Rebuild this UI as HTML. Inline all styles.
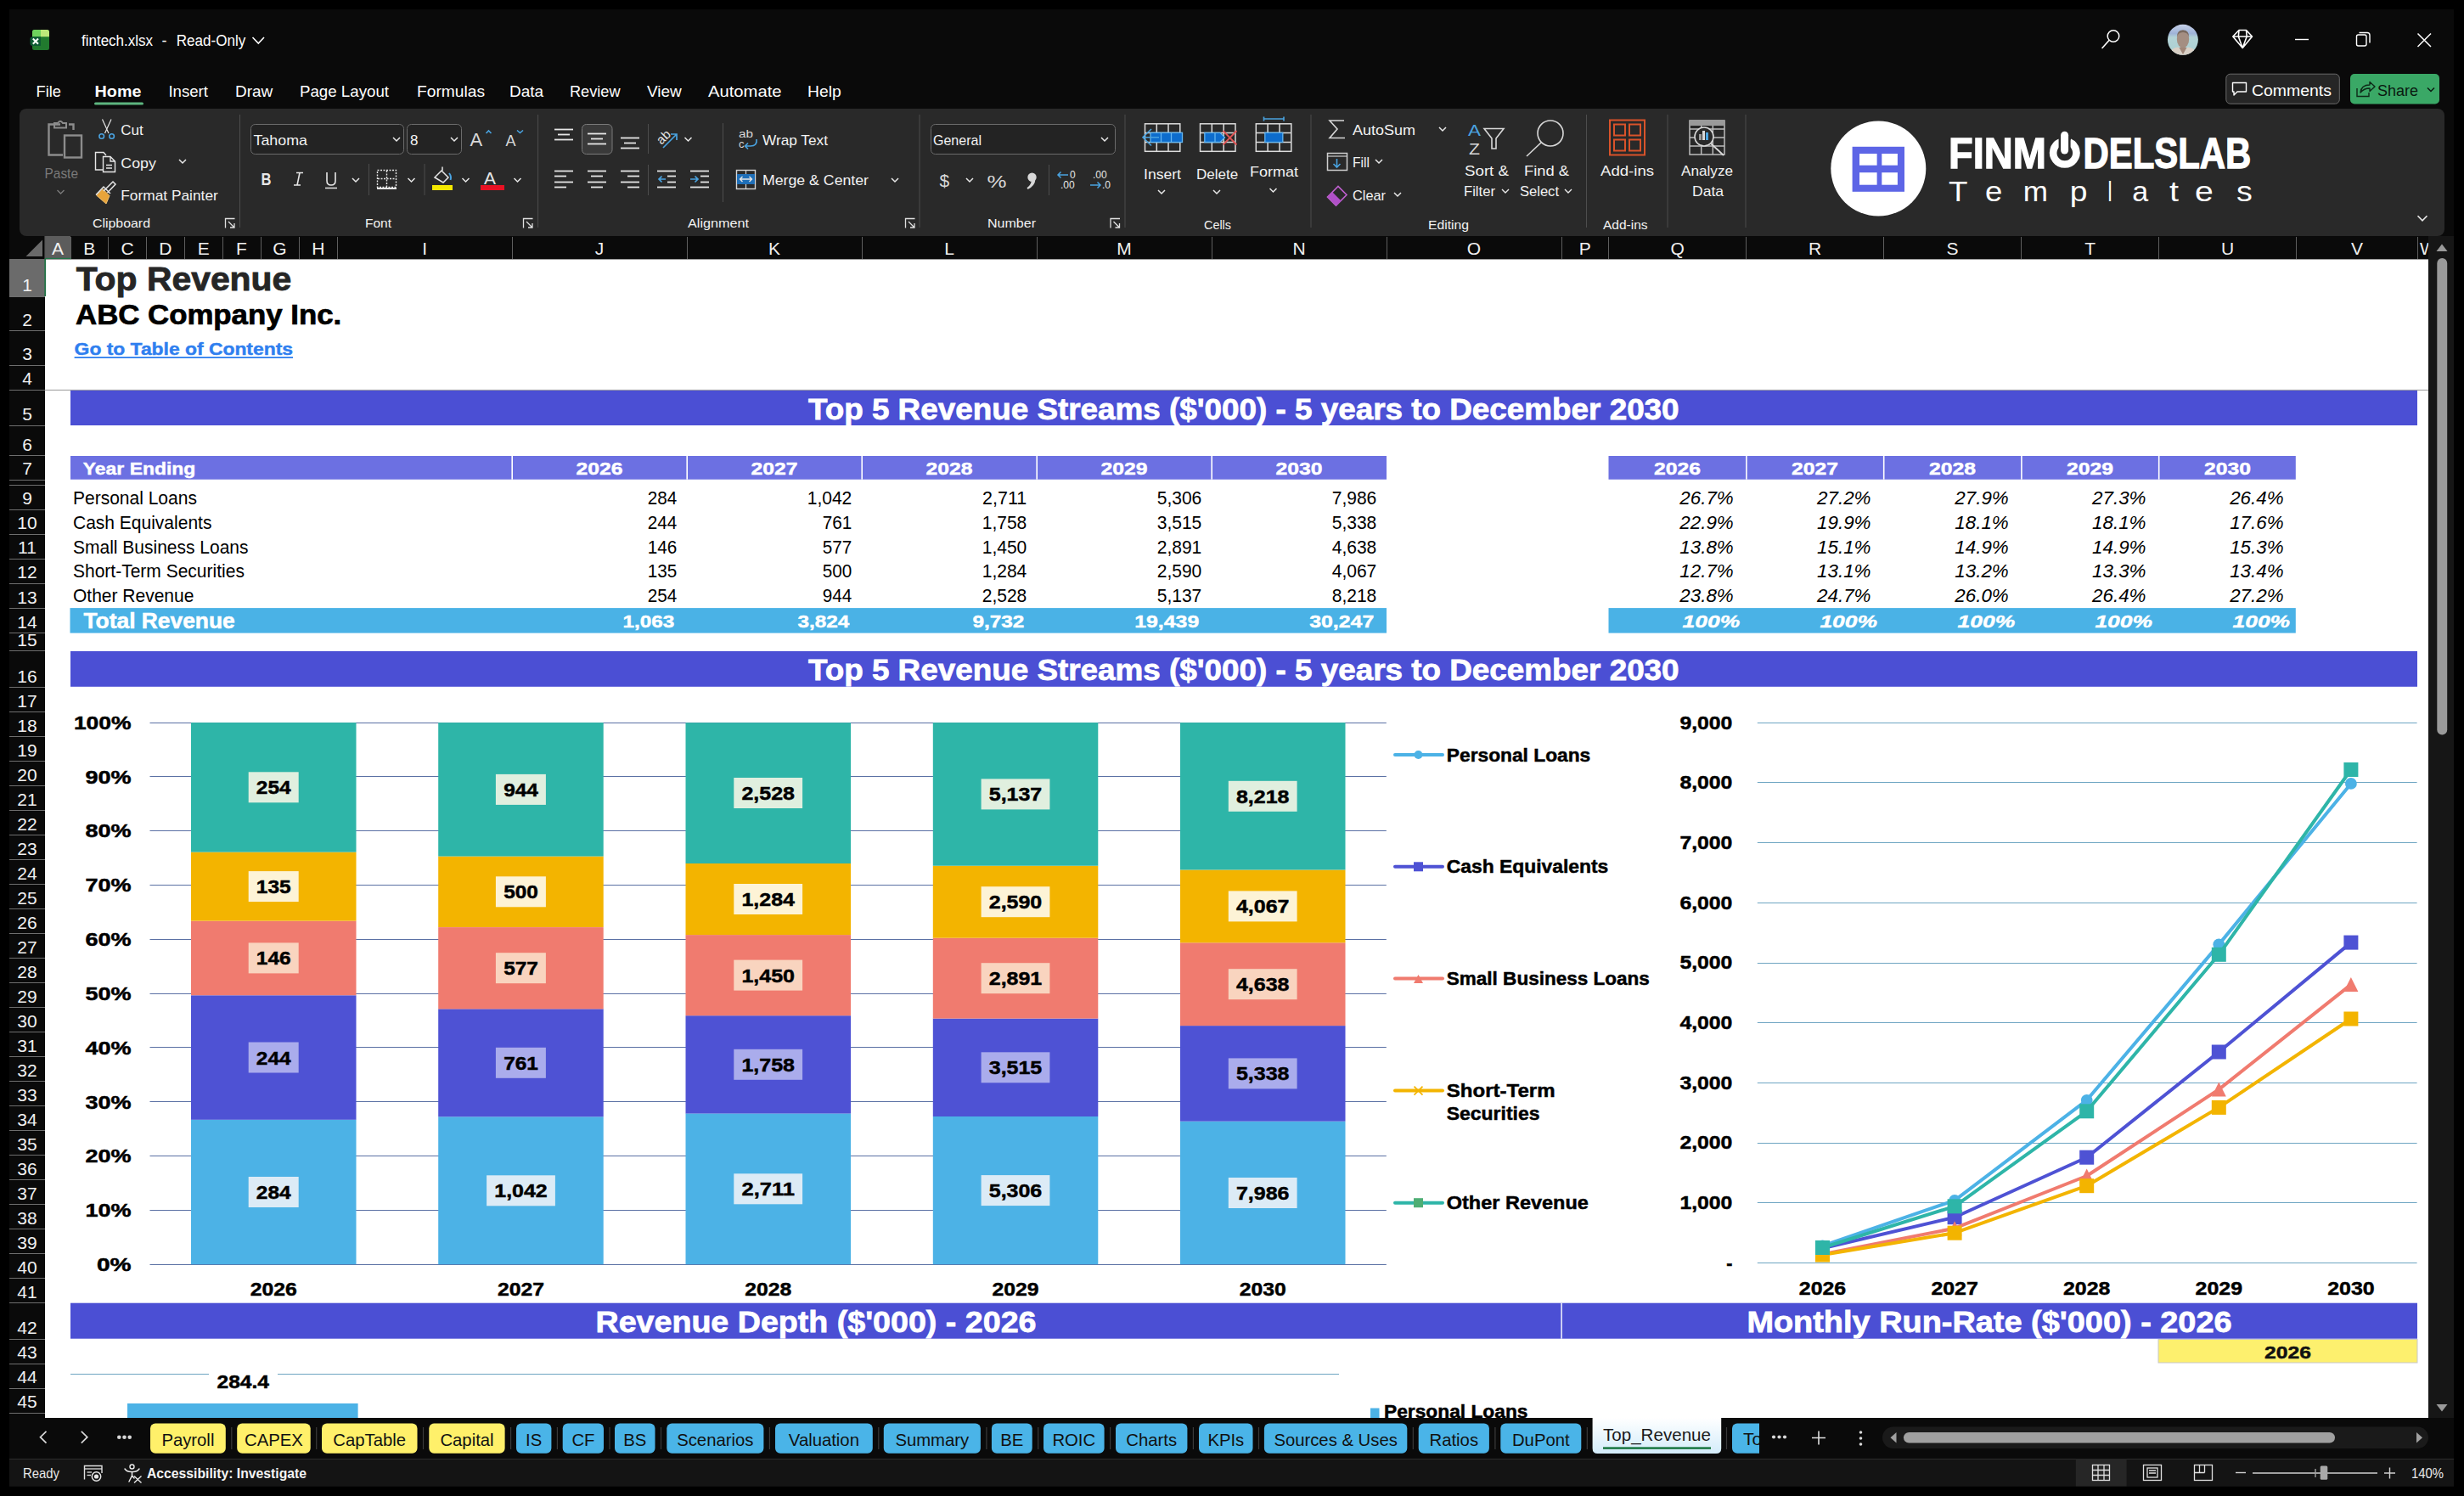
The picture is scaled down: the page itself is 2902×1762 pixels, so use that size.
<!DOCTYPE html>
<html><head><meta charset="utf-8"><title>fintech.xlsx</title>
<style>
html,body{margin:0;padding:0;background:#000;overflow:hidden;}
svg{display:block;font-family:"Liberation Sans", sans-serif;}
</style></head><body>
<svg width="2902" height="1762" viewBox="0 0 2902 1762">
<rect x="0.0" y="0.0" width="2902.0" height="1762.0" fill="#000"/>
<rect x="11.0" y="11.0" width="2879.0" height="1740.0" fill="#0a0a0a"/>
<g>
<rect x="38" y="35" width="20" height="24" rx="2.5" fill="#217a2e"/>
<path d="M38 43.3 V37.5 Q38 35 40.5 35 H48 V43.3 Z" fill="#6fd35d"/>
<path d="M48 35 H55.5 Q58 35 58 37.5 V43.3 H48 Z" fill="#bde87a"/>
<path d="M35.5 46 Q35.5 43.2 38.5 43.2 H48 V54 H38.5 Q35.5 54 35.5 51 Z" fill="#0e5a33"/>
<path d="M38.8 45.6 L45 51.8 M45 45.6 L38.8 51.8" stroke="#f4fff6" stroke-width="2.1"/>
</g>
<text x="96.0" y="53.6" font-size="18" fill="#fff" textLength="84.0" lengthAdjust="spacingAndGlyphs">fintech.xlsx</text>
<text x="190.5" y="53.6" font-size="18" fill="#fff">-</text>
<text x="207.8" y="53.6" font-size="18" fill="#fff" textLength="81.5" lengthAdjust="spacingAndGlyphs">Read-Only</text>
<path d="M297.5 44 L304.3 51 L311 44" fill="none" stroke="#fff" stroke-width="1.6"/>
<circle cx="2489" cy="42.5" r="6.8" fill="none" stroke="#fff" stroke-width="1.5"/>
<path d="M2484 47.5 L2476 56.5" stroke="#fff" stroke-width="1.6" stroke-linecap="round"/>
<defs><clipPath id="av"><circle cx="2570.9" cy="46.8" r="18"/></clipPath><linearGradient id="avg" x1="0" y1="0" x2="0" y2="1"><stop offset="0" stop-color="#c9d3ea"/><stop offset="0.3" stop-color="#9fb3d8"/><stop offset="0.42" stop-color="#b3d3d6"/><stop offset="1" stop-color="#a9cfd2"/></linearGradient></defs>
<g clip-path="url(#av)"><rect x="2552" y="28" width="38" height="38" fill="url(#avg)"/><ellipse cx="2571" cy="46" rx="7.2" ry="10.5" fill="#a48e82"/><path d="M2563.8 44 Q2564 35 2571 35.5 Q2578 35 2578.3 44 Q2577 38 2571 38 Q2565 38 2563.8 44 Z" fill="#7a6a60"/><path d="M2554 66 Q2556 56.5 2565 55.5 L2571 58 L2577 55.5 Q2586 56.5 2588 66 Z" fill="#d9d0c6"/><path d="M2566.5 56 L2571 64 L2575.5 56 Z" fill="#a08678"/></g>
<path d="M2637 35.5 H2645.5 L2652.5 43 L2641.2 56.5 L2629.8 43 Z M2629.8 43 H2652.5 M2637 35.5 L2636.3 43 L2641.2 56.5 L2646.2 43 L2645.5 35.5" fill="none" stroke="#fff" stroke-width="1.6" stroke-linejoin="round"/>
<line x1="2703.0" y1="46.5" x2="2719.0" y2="46.5" stroke="#fff" stroke-width="1.4"/>
<rect x="2775.5" y="41" width="11.5" height="13" rx="2" fill="none" stroke="#fff" stroke-width="1.4"/>
<path d="M2778.5 38.5 H2788 Q2791 38.5 2791 41.5 V50.5" fill="none" stroke="#fff" stroke-width="1.4"/>
<path d="M2847.5 39.5 L2863 55 M2863 39.5 L2847.5 55" stroke="#fff" stroke-width="1.5"/>
<text x="42.6" y="113.8" font-size="19" fill="#fff" textLength="29.4" lengthAdjust="spacingAndGlyphs">File</text>
<text x="111.6" y="113.8" font-size="19" font-weight="700" fill="#fff" textLength="54.8" lengthAdjust="spacingAndGlyphs">Home</text>
<text x="198.4" y="113.8" font-size="19" fill="#fff" textLength="46.6" lengthAdjust="spacingAndGlyphs">Insert</text>
<text x="277.0" y="113.8" font-size="19" fill="#fff">Draw</text>
<text x="353.0" y="113.8" font-size="19" fill="#fff" textLength="105.0" lengthAdjust="spacingAndGlyphs">Page Layout</text>
<text x="491.0" y="113.8" font-size="19" fill="#fff" textLength="80.0" lengthAdjust="spacingAndGlyphs">Formulas</text>
<text x="600.0" y="113.8" font-size="19" fill="#fff">Data</text>
<text x="671.0" y="113.8" font-size="19" fill="#fff" textLength="59.5" lengthAdjust="spacingAndGlyphs">Review</text>
<text x="762.0" y="113.8" font-size="19" fill="#fff">View</text>
<text x="834.0" y="113.8" font-size="19" fill="#fff" textLength="86.5" lengthAdjust="spacingAndGlyphs">Automate</text>
<text x="951.0" y="113.8" font-size="19" fill="#fff" textLength="39.7" lengthAdjust="spacingAndGlyphs">Help</text>
<rect x="111" y="120.5" width="58" height="3" rx="1.5" fill="#5db57f"/>
<rect x="2621.8" y="87.2" width="133.5" height="35" rx="5" fill="#262626" stroke="#6a6a6a" stroke-width="1"/>
<path d="M2629.5 97.5 H2645.5 V108 H2635 L2631 112 V108 H2629.5 Z" fill="none" stroke="#fff" stroke-width="1.4" stroke-linejoin="round"/>
<text x="2652.0" y="113.0" font-size="18" fill="#fff" textLength="94.0" lengthAdjust="spacingAndGlyphs">Comments</text>
<rect x="2768" y="87" width="105" height="35.5" rx="5" fill="#3aa866"/>
<path d="M2776 104 V113.5 H2790 V109" fill="none" stroke="#0e2a18" stroke-width="1.4"/>
<path d="M2780 109 Q2781 100 2791 100 V96.5 L2797 102 L2791 107.5 V104 Q2784 104 2780 109 Z" fill="none" stroke="#0e2a18" stroke-width="1.4" stroke-linejoin="round"/>
<text x="2800.0" y="113.0" font-size="18" fill="#0a1a10">Share</text>
<path d="M2859 103.5 L2863 107.5 L2867 103.5" fill="none" stroke="#0a1a10" stroke-width="1.5"/>
<rect x="23" y="128" width="2856" height="150" rx="8" fill="#292929"/>
<line x1="282.5" y1="135.0" x2="282.5" y2="268.0" stroke="#4d4d4d" stroke-width="1"/>
<line x1="633.6" y1="135.0" x2="633.6" y2="268.0" stroke="#4d4d4d" stroke-width="1"/>
<line x1="1083.0" y1="135.0" x2="1083.0" y2="268.0" stroke="#4d4d4d" stroke-width="1"/>
<line x1="1325.0" y1="135.0" x2="1325.0" y2="268.0" stroke="#4d4d4d" stroke-width="1"/>
<line x1="1544.0" y1="135.0" x2="1544.0" y2="268.0" stroke="#4d4d4d" stroke-width="1"/>
<line x1="1868.5" y1="135.0" x2="1868.5" y2="268.0" stroke="#4d4d4d" stroke-width="1"/>
<line x1="1964.0" y1="135.0" x2="1964.0" y2="268.0" stroke="#4d4d4d" stroke-width="1"/>
<line x1="2056.0" y1="135.0" x2="2056.0" y2="268.0" stroke="#4d4d4d" stroke-width="1"/>
<g fill="none" stroke="#8c8c8c" stroke-width="2.4"><path d="M71 146.5 H57.5 V182.5 H74"/><path d="M81 146.5 H86.5 V153"/><rect x="76" y="159.5" width="20" height="26"/><path d="M64 150.5 V145 H68 Q71 140.5 74 145 H78 V150.5 Z" stroke-width="2"/></g>
<text x="52.5" y="209.6" font-size="17" fill="#7a7a7a" textLength="39.5" lengthAdjust="spacingAndGlyphs">Paste</text>
<path d="M67.5 224.0 L71.5 228.0 L75.5 224.0" fill="none" stroke="#7a7a7a" stroke-width="1.4"/>
<path d="M120.5 140.5 L128 157 M131 140.5 L123.5 157" stroke="#e6e6e6" stroke-width="1.2" fill="none"/>
<circle cx="119.7" cy="160.5" r="2.8" fill="none" stroke="#4aa3e0" stroke-width="1.6"/><circle cx="131.6" cy="160.5" r="2.8" fill="none" stroke="#4aa3e0" stroke-width="1.6"/>
<text x="142.3" y="159.3" font-size="17" fill="#f2f2f2">Cut</text>
<path d="M121 200 H112.5 V179.5 H122 L125 183" fill="none" stroke="#e6e6e6" stroke-width="1.4"/>
<path d="M121.5 202.5 V184.5 H130 L135.5 190 V202.5 Z M130 184.5 V190 H135.5 M125 194.5 H132 M125 198 H132" fill="none" stroke="#e6e6e6" stroke-width="1.4"/>
<text x="142.3" y="198.0" font-size="17" fill="#f2f2f2" textLength="41.5" lengthAdjust="spacingAndGlyphs">Copy</text>
<path d="M211 188.0 L215 192.0 L219 188.0" fill="none" stroke="#e8e8e8" stroke-width="1.5"/>
<path d="M113.5 230 L121 222.5 L129 230.5 L125 240 Z" fill="#e8a43a" stroke="#f0c070" stroke-width="1"/>
<path d="M113 229.5 L122 220 L130 228 M122 225 L133 214 L136 217 L126.5 227" fill="none" stroke="#e6e6e6" stroke-width="1.5"/>
<text x="142.3" y="236.4" font-size="17" fill="#f2f2f2" textLength="114.5" lengthAdjust="spacingAndGlyphs">Format Painter</text>
<text x="109.0" y="267.7" font-size="15.5" fill="#f2f2f2" textLength="68.0" lengthAdjust="spacingAndGlyphs">Clipboard</text>
<path d="M265.5 268.5 V257.5 H276.5" fill="none" stroke="#e0e0e0" stroke-width="1.3"/>
<path d="M269 261 L276 268 M276 263 V268 H271" fill="none" stroke="#e0e0e0" stroke-width="1.3"/>
<rect x="295.5" y="146.5" width="180" height="35" rx="5" fill="#232323" stroke="#6b6b6b" stroke-width="1"/>
<text x="298.5" y="171.0" font-size="17" fill="#f2f2f2" textLength="63.5" lengthAdjust="spacingAndGlyphs">Tahoma</text>
<path d="M463 162.0 L467 166.0 L471 162.0" fill="none" stroke="#e8e8e8" stroke-width="1.5"/>
<rect x="479.5" y="146.5" width="64" height="35" rx="5" fill="#232323" stroke="#6b6b6b" stroke-width="1"/>
<text x="483.0" y="171.0" font-size="17" fill="#f2f2f2">8</text>
<path d="M531 162.0 L535 166.0 L539 162.0" fill="none" stroke="#e8e8e8" stroke-width="1.5"/>
<text x="553.5" y="172.0" font-size="22" fill="#d8d8d8">A</text>
<path d="M572.5 157 L575.5 154 L578.5 157" fill="none" stroke="#4aa3e0" stroke-width="1.6"/>
<text x="595.5" y="172.0" font-size="18" fill="#d8d8d8">A</text>
<path d="M609 153.5 L612.5 156.5 L616 153.5" fill="none" stroke="#4aa3e0" stroke-width="1.6"/>
<text x="307.5" y="218.0" font-size="20" font-weight="700" fill="#e6e6e6" textLength="12.0" lengthAdjust="spacingAndGlyphs">B</text>
<path d="M349 203.5 H357 M346 218 H354 M353 203.5 L350 218" fill="none" stroke="#e6e6e6" stroke-width="1.6"/>
<path d="M385 203 V213 Q385 218 390 218 Q395 218 395 213 V203 M383 221.5 H397" fill="none" stroke="#e6e6e6" stroke-width="1.6"/>
<path d="M415 210.0 L419 214.0 L423 210.0" fill="none" stroke="#e8e8e8" stroke-width="1.5"/>
<line x1="434.5" y1="193.0" x2="434.5" y2="230.0" stroke="#4d4d4d" stroke-width="1"/>
<g stroke="#e6e6e6" stroke-width="1.4" stroke-dasharray="2 1.5" fill="none"><rect x="444.5" y="200.5" width="22" height="20"/><path d="M455.5 201 V220 M445 210.5 H466"/></g>
<line x1="444.0" y1="222.0" x2="467.0" y2="222.0" stroke="#e6e6e6" stroke-width="2"/>
<path d="M480.5 210.0 L484.5 214.0 L488.5 210.0" fill="none" stroke="#e8e8e8" stroke-width="1.5"/>
<line x1="500.0" y1="193.0" x2="500.0" y2="230.0" stroke="#4d4d4d" stroke-width="1"/>
<path d="M512 209 L520 201 L528 209 L522 215 Z" fill="none" stroke="#e6e6e6" stroke-width="1.5"/>
<path d="M521 201 V196.5" stroke="#e6e6e6" stroke-width="1.5"/><path d="M529 204 Q532 208 530.5 212" stroke="#4aa3e0" stroke-width="2" fill="none"/>
<rect x="509.0" y="218.0" width="24.0" height="6.0" fill="#f4e800"/>
<path d="M544.5 210.0 L548.5 214.0 L552.5 210.0" fill="none" stroke="#e8e8e8" stroke-width="1.5"/>
<text x="570.0" y="216.5" font-size="20" fill="#e6e6e6" textLength="14.0" lengthAdjust="spacingAndGlyphs">A</text>
<rect x="566.0" y="218.0" width="28.0" height="6.0" fill="#e81123"/>
<path d="M605.5 210.0 L609.5 214.0 L613.5 210.0" fill="none" stroke="#e8e8e8" stroke-width="1.5"/>
<text x="430.0" y="268.0" font-size="15.5" fill="#f2f2f2">Font</text>
<path d="M616.5 268.5 V257.5 H627.5" fill="none" stroke="#e0e0e0" stroke-width="1.3"/>
<path d="M620 261 L627 268 M627 263 V268 H622" fill="none" stroke="#e0e0e0" stroke-width="1.3"/>
<rect x="685.5" y="146.5" width="35.5" height="35" rx="5" fill="#3a3a3a" stroke="#7a7a7a" stroke-width="1"/>
<line x1="653.0" y1="152.5" x2="675.0" y2="152.5" stroke="#e6e6e6" stroke-width="1.8"/>
<line x1="657.0" y1="158.5" x2="671.0" y2="158.5" stroke="#e6e6e6" stroke-width="1.8"/>
<line x1="653.0" y1="164.5" x2="675.0" y2="164.5" stroke="#e6e6e6" stroke-width="1.8"/>
<line x1="692.0" y1="157.5" x2="714.0" y2="157.5" stroke="#e6e6e6" stroke-width="1.8"/>
<line x1="696.0" y1="163.5" x2="710.0" y2="163.5" stroke="#e6e6e6" stroke-width="1.8"/>
<line x1="692.0" y1="169.5" x2="714.0" y2="169.5" stroke="#e6e6e6" stroke-width="1.8"/>
<line x1="731.0" y1="162.5" x2="753.0" y2="162.5" stroke="#e6e6e6" stroke-width="1.8"/>
<line x1="735.0" y1="168.5" x2="749.0" y2="168.5" stroke="#e6e6e6" stroke-width="1.8"/>
<line x1="731.0" y1="174.5" x2="753.0" y2="174.5" stroke="#e6e6e6" stroke-width="1.8"/>
<line x1="763.5" y1="146.0" x2="763.5" y2="181.0" stroke="#4d4d4d" stroke-width="1"/>
<text x="0" y="0" font-size="15" fill="#e6e6e6" transform="translate(779 171) rotate(-45)">ab</text>
<path d="M781 174 L797 158 M790 158 H797 V165" fill="none" stroke="#4aa3e0" stroke-width="1.7"/>
<path d="M806.5 162.0 L810.5 166.0 L814.5 162.0" fill="none" stroke="#e8e8e8" stroke-width="1.5"/>
<line x1="851.5" y1="145.0" x2="851.5" y2="238.0" stroke="#4d4d4d" stroke-width="1"/>
<text x="870.0" y="162.0" font-size="13" fill="#d8d8d8" textLength="17.0" lengthAdjust="spacingAndGlyphs">ab</text>
<text x="870.0" y="174.0" font-size="13" fill="#d8d8d8">c</text>
<path d="M891 164 Q892 172 884 172 H878 M881 168.5 L877.5 172 L881 175.5" fill="none" stroke="#4aa3e0" stroke-width="1.7"/>
<text x="898.0" y="170.7" font-size="17" fill="#f2f2f2" textLength="77.0" lengthAdjust="spacingAndGlyphs">Wrap Text</text>
<line x1="653.0" y1="201.5" x2="675.0" y2="201.5" stroke="#e6e6e6" stroke-width="1.8"/>
<line x1="653.0" y1="207.5" x2="667.0" y2="207.5" stroke="#e6e6e6" stroke-width="1.8"/>
<line x1="653.0" y1="214.5" x2="675.0" y2="214.5" stroke="#e6e6e6" stroke-width="1.8"/>
<line x1="653.0" y1="220.5" x2="667.0" y2="220.5" stroke="#e6e6e6" stroke-width="1.8"/>
<line x1="692.0" y1="201.5" x2="714.0" y2="201.5" stroke="#e6e6e6" stroke-width="1.8"/>
<line x1="696.0" y1="207.5" x2="710.0" y2="207.5" stroke="#e6e6e6" stroke-width="1.8"/>
<line x1="692.0" y1="214.5" x2="714.0" y2="214.5" stroke="#e6e6e6" stroke-width="1.8"/>
<line x1="696.0" y1="220.5" x2="710.0" y2="220.5" stroke="#e6e6e6" stroke-width="1.8"/>
<line x1="731.0" y1="201.5" x2="753.0" y2="201.5" stroke="#e6e6e6" stroke-width="1.8"/>
<line x1="739.0" y1="207.5" x2="753.0" y2="207.5" stroke="#e6e6e6" stroke-width="1.8"/>
<line x1="731.0" y1="214.5" x2="753.0" y2="214.5" stroke="#e6e6e6" stroke-width="1.8"/>
<line x1="739.0" y1="220.5" x2="753.0" y2="220.5" stroke="#e6e6e6" stroke-width="1.8"/>
<line x1="763.5" y1="194.0" x2="763.5" y2="230.0" stroke="#4d4d4d" stroke-width="1"/>
<line x1="774.0" y1="201.5" x2="796.0" y2="201.5" stroke="#e6e6e6" stroke-width="1.8"/>
<line x1="786.0" y1="207.5" x2="796.0" y2="207.5" stroke="#e6e6e6" stroke-width="1.8"/>
<line x1="786.0" y1="214.5" x2="796.0" y2="214.5" stroke="#e6e6e6" stroke-width="1.8"/>
<line x1="774.0" y1="220.5" x2="796.0" y2="220.5" stroke="#e6e6e6" stroke-width="1.8"/>
<path d="M784 211 H776 M779.5 207.5 L776 211 L779.5 214.5" fill="none" stroke="#4aa3e0" stroke-width="1.7"/>
<line x1="813.0" y1="201.5" x2="835.0" y2="201.5" stroke="#e6e6e6" stroke-width="1.8"/>
<line x1="825.0" y1="207.5" x2="835.0" y2="207.5" stroke="#e6e6e6" stroke-width="1.8"/>
<line x1="825.0" y1="214.5" x2="835.0" y2="214.5" stroke="#e6e6e6" stroke-width="1.8"/>
<line x1="813.0" y1="220.5" x2="835.0" y2="220.5" stroke="#e6e6e6" stroke-width="1.8"/>
<path d="M813 211 H822 M818.5 207.5 L822 211 L818.5 214.5" fill="none" stroke="#4aa3e0" stroke-width="1.7"/>
<rect x="867.5" y="200.5" width="22" height="22" fill="none" stroke="#d8d8d8" stroke-width="1.4"/>
<rect x="868.0" y="205.0" width="21.0" height="12.0" fill="#1f6fb8"/>
<path d="M872 211 H885 M874.5 208 L871.5 211 L874.5 214 M882.5 208 L885.5 211 L882.5 214" fill="none" stroke="#e6e6e6" stroke-width="1.4"/>
<line x1="878.5" y1="200.5" x2="878.5" y2="205.0" stroke="#d8d8d8" stroke-width="1.2"/>
<line x1="878.5" y1="217.0" x2="878.5" y2="222.5" stroke="#d8d8d8" stroke-width="1.2"/>
<text x="898.0" y="218.3" font-size="17" fill="#f2f2f2" textLength="125.0" lengthAdjust="spacingAndGlyphs">Merge &amp; Center</text>
<path d="M1050 210.0 L1054 214.0 L1058 210.0" fill="none" stroke="#e8e8e8" stroke-width="1.5"/>
<text x="810.0" y="268.0" font-size="15.5" fill="#f2f2f2" textLength="72.0" lengthAdjust="spacingAndGlyphs">Alignment</text>
<path d="M1066.5 268.5 V257.5 H1077.5" fill="none" stroke="#e0e0e0" stroke-width="1.3"/>
<path d="M1070 261 L1077 268 M1077 263 V268 H1072" fill="none" stroke="#e0e0e0" stroke-width="1.3"/>
<rect x="1096.5" y="146.5" width="217" height="35" rx="5" fill="#232323" stroke="#6b6b6b" stroke-width="1"/>
<text x="1099.0" y="171.0" font-size="17" fill="#f2f2f2" textLength="57.0" lengthAdjust="spacingAndGlyphs">General</text>
<path d="M1297 162.0 L1301 166.0 L1305 162.0" fill="none" stroke="#e8e8e8" stroke-width="1.5"/>
<text x="1106.5" y="220.0" font-size="21" fill="#d8d8d8">$</text>
<path d="M1138 210.0 L1142 214.0 L1146 210.0" fill="none" stroke="#e8e8e8" stroke-width="1.5"/>
<text x="1162.5" y="221.0" font-size="21" fill="#d8d8d8" textLength="23.0" lengthAdjust="spacingAndGlyphs">%</text>
<path d="M1215.5 203.5 a5.2 5.2 0 1 1 0 10.4 a5.2 5.2 0 0 1 0 -10.4 Z M1219.5 211 Q1219 219 1210.5 223 L1209.5 221.2 Q1214.5 218 1214.8 212.5 Z" fill="#d8d8d8"/>
<line x1="1235.5" y1="194.0" x2="1235.5" y2="230.0" stroke="#4d4d4d" stroke-width="1"/>
<text x="1260.0" y="210.0" font-size="12" fill="#e6e6e6">0</text>
<text x="1249.0" y="222.0" font-size="12" fill="#e6e6e6">.00</text>
<path d="M1258 206 H1246 M1249.5 202.5 L1246 206 L1249.5 209.5" fill="none" stroke="#4aa3e0" stroke-width="1.5"/>
<text x="1287.0" y="210.0" font-size="12" fill="#e6e6e6">.00</text>
<text x="1298.0" y="222.0" font-size="12" fill="#e6e6e6">.0</text>
<path d="M1284 218 H1296 M1292.5 214.5 L1296 218 L1292.5 221.5" fill="none" stroke="#4aa3e0" stroke-width="1.5"/>
<text x="1163.0" y="268.0" font-size="15.5" fill="#f2f2f2" textLength="57.0" lengthAdjust="spacingAndGlyphs">Number</text>
<path d="M1308.0 268.5 V257.5 H1319.0" fill="none" stroke="#e0e0e0" stroke-width="1.3"/>
<path d="M1311.5 261 L1318.5 268 M1318.5 263 V268 H1313.5" fill="none" stroke="#e0e0e0" stroke-width="1.3"/>
<rect x="1348.5" y="145.8" width="41.3" height="32.5" fill="none" stroke="#dcdcdc" stroke-width="1.5"/>
<line x1="1362.3" y1="145.8" x2="1362.3" y2="178.3" stroke="#dcdcdc" stroke-width="1.5"/>
<line x1="1376.0" y1="145.8" x2="1376.0" y2="178.3" stroke="#dcdcdc" stroke-width="1.5"/>
<line x1="1348.5" y1="156.6" x2="1389.8" y2="156.6" stroke="#dcdcdc" stroke-width="1.5"/>
<line x1="1348.5" y1="167.5" x2="1389.8" y2="167.5" stroke="#dcdcdc" stroke-width="1.5"/>
<rect x="1355" y="156.3" width="37.5" height="11.2" fill="#0d6ccc" stroke="#62b6f2" stroke-width="1.3"/>
<line x1="1367.5" y1="156.3" x2="1367.5" y2="167.5" stroke="#62b6f2" stroke-width="1.3"/>
<line x1="1379.5" y1="156.3" x2="1379.5" y2="167.5" stroke="#62b6f2" stroke-width="1.3"/>
<path d="M1356 152 L1346 161.8 L1356 171.5 M1346.5 161.8 H1365" fill="none" stroke="#4aa3e0" stroke-width="1.6"/>
<rect x="1413.5" y="145.8" width="41.5" height="32.5" fill="none" stroke="#dcdcdc" stroke-width="1.5"/>
<line x1="1427.3" y1="145.8" x2="1427.3" y2="178.3" stroke="#dcdcdc" stroke-width="1.5"/>
<line x1="1441.2" y1="145.8" x2="1441.2" y2="178.3" stroke="#dcdcdc" stroke-width="1.5"/>
<line x1="1413.5" y1="156.6" x2="1455.0" y2="156.6" stroke="#dcdcdc" stroke-width="1.5"/>
<line x1="1413.5" y1="167.5" x2="1455.0" y2="167.5" stroke="#dcdcdc" stroke-width="1.5"/>
<path d="M1418.8 156.3 H1437 L1442.5 161.9 L1437 167.5 H1418.8 Z" fill="#0d6ccc" stroke="#62b6f2" stroke-width="1.3"/>
<line x1="1431.0" y1="156.3" x2="1431.0" y2="167.5" stroke="#62b6f2" stroke-width="1.3"/>
<path d="M1440.5 154 L1456.5 170.5 M1456.5 154 L1440.5 170.5" stroke="#e05555" stroke-width="1.8"/>
<rect x="1479.3" y="145.8" width="41.5" height="32.5" fill="none" stroke="#dcdcdc" stroke-width="1.5"/>
<line x1="1493.1" y1="145.8" x2="1493.1" y2="178.3" stroke="#dcdcdc" stroke-width="1.5"/>
<line x1="1507.0" y1="145.8" x2="1507.0" y2="178.3" stroke="#dcdcdc" stroke-width="1.5"/>
<line x1="1479.3" y1="156.6" x2="1520.8" y2="156.6" stroke="#dcdcdc" stroke-width="1.5"/>
<line x1="1479.3" y1="167.5" x2="1520.8" y2="167.5" stroke="#dcdcdc" stroke-width="1.5"/>
<rect x="1489.8" y="156.3" width="21" height="11.2" fill="#0d6ccc" stroke="#62b6f2" stroke-width="1.3"/>
<path d="M1488.5 140 H1512 M1488.5 137.5 V142.5 M1512 137.5 V142.5" stroke="#4aa3e0" stroke-width="1.6"/>
<text x="1347.0" y="211.0" font-size="17" fill="#f2f2f2" textLength="44.0" lengthAdjust="spacingAndGlyphs">Insert</text>
<text x="1409.0" y="211.0" font-size="17" fill="#f2f2f2">Delete</text>
<text x="1472.0" y="208.0" font-size="17" fill="#f2f2f2" textLength="57.0" lengthAdjust="spacingAndGlyphs">Format</text>
<path d="M1364 224.0 L1368 228.0 L1372 224.0" fill="none" stroke="#e8e8e8" stroke-width="1.5"/>
<path d="M1429 224.0 L1433 228.0 L1437 224.0" fill="none" stroke="#e8e8e8" stroke-width="1.5"/>
<path d="M1495.5 222.0 L1499.5 226.0 L1503.5 222.0" fill="none" stroke="#e8e8e8" stroke-width="1.5"/>
<text x="1418.0" y="270.0" font-size="15.5" fill="#f2f2f2" textLength="32.0" lengthAdjust="spacingAndGlyphs">Cells</text>
<path d="M1583 142 H1566 L1575 152 L1566 162.5 H1584" fill="none" stroke="#d8d8d8" stroke-width="1.6"/>
<text x="1593.0" y="159.0" font-size="17" fill="#f2f2f2" textLength="74.0" lengthAdjust="spacingAndGlyphs">AutoSum</text>
<path d="M1695 150.0 L1699 154.0 L1703 150.0" fill="none" stroke="#e8e8e8" stroke-width="1.5"/>
<rect x="1563.5" y="180.5" width="23" height="20" fill="none" stroke="#cfcfcf" stroke-width="1.5"/>
<line x1="1563.5" y1="184.0" x2="1586.5" y2="184.0" stroke="#cfcfcf" stroke-width="1.2"/>
<path d="M1574.5 187 V197 M1570.5 193 L1574.5 197 L1578.5 193" fill="none" stroke="#4aa3e0" stroke-width="1.6"/>
<text x="1593.0" y="197.0" font-size="17" fill="#f2f2f2" textLength="20.0" lengthAdjust="spacingAndGlyphs">Fill</text>
<path d="M1620 188.0 L1624 192.0 L1628 188.0" fill="none" stroke="#e8e8e8" stroke-width="1.5"/>
<path d="M1563.5 232 L1576 219.5 L1586 229.5 L1573.5 242 Z" fill="none" stroke="#c060d0" stroke-width="1.6"/>
<path d="M1564 232 L1569.5 226.5 L1579.5 236.5 L1574 242 Z" fill="#b050c8"/>
<text x="1593.0" y="236.0" font-size="17" fill="#f2f2f2" textLength="39.0" lengthAdjust="spacingAndGlyphs">Clear</text>
<path d="M1642 227.0 L1646 231.0 L1650 227.0" fill="none" stroke="#e8e8e8" stroke-width="1.5"/>
<text x="1729.0" y="160.0" font-size="18" fill="#4aa3e0" textLength="15.0" lengthAdjust="spacingAndGlyphs">A</text>
<text x="1730.0" y="182.0" font-size="18" fill="#d8d8d8" textLength="13.0" lengthAdjust="spacingAndGlyphs">Z</text>
<path d="M1748 151.5 H1771 L1762 163 V175 H1757 V163 Z" fill="none" stroke="#d8d8d8" stroke-width="1.6"/>
<text x="1725.0" y="207.0" font-size="17" fill="#f2f2f2" textLength="52.0" lengthAdjust="spacingAndGlyphs">Sort &amp;</text>
<text x="1724.0" y="231.0" font-size="17" fill="#f2f2f2" textLength="37.0" lengthAdjust="spacingAndGlyphs">Filter</text>
<path d="M1769 223.0 L1773 227.0 L1777 223.0" fill="none" stroke="#e8e8e8" stroke-width="1.4"/>
<circle cx="1826" cy="157" r="15" fill="none" stroke="#d8d8d8" stroke-width="1.6"/><path d="M1815.5 167.5 L1798 184" stroke="#d8d8d8" stroke-width="1.6"/>
<text x="1795.0" y="207.0" font-size="17" fill="#f2f2f2" textLength="53.0" lengthAdjust="spacingAndGlyphs">Find &amp;</text>
<text x="1790.0" y="231.0" font-size="17" fill="#f2f2f2" textLength="46.0" lengthAdjust="spacingAndGlyphs">Select</text>
<path d="M1843 223.0 L1847 227.0 L1851 223.0" fill="none" stroke="#e8e8e8" stroke-width="1.4"/>
<text x="1682.0" y="270.0" font-size="15.5" fill="#f2f2f2" textLength="48.0" lengthAdjust="spacingAndGlyphs">Editing</text>
<g fill="none" stroke="#d9532a" stroke-width="2"><rect x="1896" y="141.5" width="41" height="41"/><rect x="1901" y="146.5" width="13" height="13"/><rect x="1919" y="146.5" width="13" height="13"/><rect x="1901" y="164.5" width="13" height="13"/><rect x="1919" y="164.5" width="13" height="13"/></g>
<text x="1885.0" y="207.0" font-size="17" fill="#f2f2f2" textLength="63.0" lengthAdjust="spacingAndGlyphs">Add-ins</text>
<text x="1888.0" y="270.0" font-size="15.5" fill="#f2f2f2">Add-ins</text>
<rect x="1990" y="142" width="41" height="40" fill="none" stroke="#bdbdbd" stroke-width="1.5"/>
<line x1="2003.7" y1="142.0" x2="2003.7" y2="182.0" stroke="#bdbdbd" stroke-width="1.5"/>
<line x1="2017.3" y1="142.0" x2="2017.3" y2="182.0" stroke="#bdbdbd" stroke-width="1.5"/>
<line x1="1990.0" y1="152.0" x2="2031.0" y2="152.0" stroke="#bdbdbd" stroke-width="1.5"/>
<line x1="1990.0" y1="162.0" x2="2031.0" y2="162.0" stroke="#bdbdbd" stroke-width="1.5"/>
<line x1="1990.0" y1="172.0" x2="2031.0" y2="172.0" stroke="#bdbdbd" stroke-width="1.5"/>
<rect x="1990.0" y="142.0" width="41.0" height="6.0" fill="#9a9a9a"/>
<circle cx="2007" cy="161" r="11" fill="#292929" stroke="#d8d8d8" stroke-width="1.6"/>
<rect x="2001.0" y="158.0" width="3.0" height="7.0" fill="#9a9a9a"/>
<rect x="2005.0" y="154.0" width="3.0" height="11.0" fill="#d8d8d8"/>
<rect x="2009.0" y="156.0" width="3.0" height="9.0" fill="#4aa3e0"/>
<path d="M2015 169 L2030 183" stroke="#d8d8d8" stroke-width="1.8"/>
<text x="1980.0" y="207.0" font-size="17" fill="#f2f2f2" textLength="61.0" lengthAdjust="spacingAndGlyphs">Analyze</text>
<text x="1993.0" y="231.0" font-size="17" fill="#f2f2f2" textLength="37.0" lengthAdjust="spacingAndGlyphs">Data</text>
<circle cx="2212.3" cy="198.6" r="56" fill="#fff"/>
<rect x="2181.6" y="172.8" width="61.4" height="53.0" fill="#5d65e6"/>
<rect x="2190.0" y="181.0" width="20.6" height="13.7" fill="#fff"/>
<rect x="2216.3" y="181.0" width="18.6" height="13.7" fill="#fff"/>
<rect x="2190.0" y="203.2" width="20.6" height="14.5" fill="#fff"/>
<rect x="2216.3" y="203.2" width="18.6" height="14.5" fill="#fff"/>
<text x="2295.0" y="197.8" font-size="49.7" font-weight="700" fill="#fff" textLength="114.9" lengthAdjust="spacingAndGlyphs" stroke="#fff" stroke-width="1.3">FINM</text>
<text x="2453.5" y="197.8" font-size="49.7" font-weight="700" fill="#fff" textLength="197.8" lengthAdjust="spacingAndGlyphs" stroke="#fff" stroke-width="1.3">DELSLAB</text>
<path d="M2426.3 167.5 A13.6 13.6 0 1 0 2437.3 167.5" fill="none" stroke="#fff" stroke-width="8.6"/>
<line x1="2431.6" y1="160" x2="2431.6" y2="177" stroke="#292929" stroke-width="14" stroke-linecap="round"/>
<line x1="2431.6" y1="159.3" x2="2431.6" y2="177" stroke="#fff" stroke-width="9" stroke-linecap="round"/>
<text x="2306.2" y="237.1" font-size="34" fill="#fff" text-anchor="middle" textLength="22.5" lengthAdjust="spacingAndGlyphs">T</text>
<text x="2348.2" y="237.1" font-size="34" fill="#fff" text-anchor="middle" textLength="20.3" lengthAdjust="spacingAndGlyphs">e</text>
<text x="2397.3" y="237.1" font-size="34" fill="#fff" text-anchor="middle" textLength="29.2" lengthAdjust="spacingAndGlyphs">m</text>
<text x="2448.2" y="237.1" font-size="34" fill="#fff" text-anchor="middle" textLength="20.7" lengthAdjust="spacingAndGlyphs">p</text>
<text x="2485.0" y="237.1" font-size="34" fill="#fff" text-anchor="middle" textLength="5.0" lengthAdjust="spacingAndGlyphs">l</text>
<text x="2520.8" y="237.1" font-size="34" fill="#fff" text-anchor="middle">a</text>
<text x="2560.5" y="237.1" font-size="34" fill="#fff" text-anchor="middle" textLength="11.0" lengthAdjust="spacingAndGlyphs">t</text>
<text x="2595.9" y="237.1" font-size="34" fill="#fff" text-anchor="middle" textLength="21.8" lengthAdjust="spacingAndGlyphs">e</text>
<text x="2643.4" y="237.1" font-size="34" fill="#fff" text-anchor="middle" textLength="18.8" lengthAdjust="spacingAndGlyphs">s</text>
<path d="M2847.5 254.25 L2853 259.75 L2858.5 254.25" fill="none" stroke="#e8e8e8" stroke-width="1.6"/>
<rect x="11.0" y="278.0" width="2849.0" height="27.0" fill="#0a0a0a"/>
<rect x="53.0" y="278.0" width="30.0" height="27.0" fill="#5c5c5c"/>
<path d="M30.5 302 H50 V282.5 Z" fill="#6a6a6a"/>
<defs><clipPath id="colclip"><rect x="53" y="278" width="2807" height="27"/></clipPath></defs>
<g clip-path="url(#colclip)">
<line x1="83.5" y1="279.0" x2="83.5" y2="305.0" stroke="#5e5e5e" stroke-width="1"/>
<text x="68.0" y="299.9" font-size="21" fill="#f0f0f0" text-anchor="middle">A</text>
<line x1="127.5" y1="279.0" x2="127.5" y2="305.0" stroke="#5e5e5e" stroke-width="1"/>
<text x="105.3" y="299.9" font-size="21" fill="#f0f0f0" text-anchor="middle">B</text>
<line x1="172.5" y1="279.0" x2="172.5" y2="305.0" stroke="#5e5e5e" stroke-width="1"/>
<text x="150.1" y="299.9" font-size="21" fill="#f0f0f0" text-anchor="middle">C</text>
<line x1="217.5" y1="279.0" x2="217.5" y2="305.0" stroke="#5e5e5e" stroke-width="1"/>
<text x="194.9" y="299.9" font-size="21" fill="#f0f0f0" text-anchor="middle">D</text>
<line x1="262.5" y1="279.0" x2="262.5" y2="305.0" stroke="#5e5e5e" stroke-width="1"/>
<text x="239.7" y="299.9" font-size="21" fill="#f0f0f0" text-anchor="middle">E</text>
<line x1="307.5" y1="279.0" x2="307.5" y2="305.0" stroke="#5e5e5e" stroke-width="1"/>
<text x="284.5" y="299.9" font-size="21" fill="#f0f0f0" text-anchor="middle">F</text>
<line x1="352.5" y1="279.0" x2="352.5" y2="305.0" stroke="#5e5e5e" stroke-width="1"/>
<text x="329.5" y="299.9" font-size="21" fill="#f0f0f0" text-anchor="middle">G</text>
<line x1="397.5" y1="279.0" x2="397.5" y2="305.0" stroke="#5e5e5e" stroke-width="1"/>
<text x="374.8" y="299.9" font-size="21" fill="#f0f0f0" text-anchor="middle">H</text>
<line x1="603.5" y1="279.0" x2="603.5" y2="305.0" stroke="#5e5e5e" stroke-width="1"/>
<text x="500.2" y="299.9" font-size="21" fill="#f0f0f0" text-anchor="middle">I</text>
<line x1="809.5" y1="279.0" x2="809.5" y2="305.0" stroke="#5e5e5e" stroke-width="1"/>
<text x="706.0" y="299.9" font-size="21" fill="#f0f0f0" text-anchor="middle">J</text>
<line x1="1015.5" y1="279.0" x2="1015.5" y2="305.0" stroke="#5e5e5e" stroke-width="1"/>
<text x="912.0" y="299.9" font-size="21" fill="#f0f0f0" text-anchor="middle">K</text>
<line x1="1221.5" y1="279.0" x2="1221.5" y2="305.0" stroke="#5e5e5e" stroke-width="1"/>
<text x="1118.0" y="299.9" font-size="21" fill="#f0f0f0" text-anchor="middle">L</text>
<line x1="1427.5" y1="279.0" x2="1427.5" y2="305.0" stroke="#5e5e5e" stroke-width="1"/>
<text x="1324.0" y="299.9" font-size="21" fill="#f0f0f0" text-anchor="middle">M</text>
<line x1="1633.5" y1="279.0" x2="1633.5" y2="305.0" stroke="#5e5e5e" stroke-width="1"/>
<text x="1530.0" y="299.9" font-size="21" fill="#f0f0f0" text-anchor="middle">N</text>
<line x1="1839.5" y1="279.0" x2="1839.5" y2="305.0" stroke="#5e5e5e" stroke-width="1"/>
<text x="1736.0" y="299.9" font-size="21" fill="#f0f0f0" text-anchor="middle">O</text>
<line x1="1894.5" y1="279.0" x2="1894.5" y2="305.0" stroke="#5e5e5e" stroke-width="1"/>
<text x="1866.8" y="299.9" font-size="21" fill="#f0f0f0" text-anchor="middle">P</text>
<line x1="2056.5" y1="279.0" x2="2056.5" y2="305.0" stroke="#5e5e5e" stroke-width="1"/>
<text x="1975.6" y="299.9" font-size="21" fill="#f0f0f0" text-anchor="middle">Q</text>
<line x1="2218.5" y1="279.0" x2="2218.5" y2="305.0" stroke="#5e5e5e" stroke-width="1"/>
<text x="2137.6" y="299.9" font-size="21" fill="#f0f0f0" text-anchor="middle">R</text>
<line x1="2380.5" y1="279.0" x2="2380.5" y2="305.0" stroke="#5e5e5e" stroke-width="1"/>
<text x="2299.6" y="299.9" font-size="21" fill="#f0f0f0" text-anchor="middle">S</text>
<line x1="2542.5" y1="279.0" x2="2542.5" y2="305.0" stroke="#5e5e5e" stroke-width="1"/>
<text x="2461.6" y="299.9" font-size="21" fill="#f0f0f0" text-anchor="middle">T</text>
<line x1="2704.5" y1="279.0" x2="2704.5" y2="305.0" stroke="#5e5e5e" stroke-width="1"/>
<text x="2623.6" y="299.9" font-size="21" fill="#f0f0f0" text-anchor="middle">U</text>
<line x1="2847.5" y1="279.0" x2="2847.5" y2="305.0" stroke="#5e5e5e" stroke-width="1"/>
<text x="2776.1" y="299.9" font-size="21" fill="#f0f0f0" text-anchor="middle">V</text>
<line x1="2872.5" y1="279.0" x2="2872.5" y2="305.0" stroke="#5e5e5e" stroke-width="1"/>
<text x="2859.8" y="299.9" font-size="21" fill="#f0f0f0" text-anchor="middle">W</text>
</g>
<line x1="52.9" y1="278.0" x2="52.9" y2="305.0" stroke="#555" stroke-width="1"/>
<rect x="53.0" y="303.8" width="30.5" height="1.8" fill="#217346"/>
<rect x="11.0" y="305.0" width="42.0" height="1365.0" fill="#0a0a0a"/>
<rect x="11.0" y="305.0" width="42.0" height="44.0" fill="#6b6b6b"/>
<defs><clipPath id="rowclip"><rect x="11" y="305" width="42" height="1365"/></clipPath></defs>
<g clip-path="url(#rowclip)">
<line x1="11.0" y1="571.5" x2="53.0" y2="571.5" stroke="#6e6e6e" stroke-width="1"/>
<line x1="11.0" y1="349.5" x2="53.0" y2="349.5" stroke="#6e6e6e" stroke-width="1"/>
<text x="32.0" y="343.0" font-size="21" fill="#f0f0f0" text-anchor="middle">1</text>
<line x1="11.0" y1="389.5" x2="53.0" y2="389.5" stroke="#6e6e6e" stroke-width="1"/>
<text x="32.0" y="383.5" font-size="21" fill="#f0f0f0" text-anchor="middle">2</text>
<line x1="11.0" y1="430.5" x2="53.0" y2="430.5" stroke="#6e6e6e" stroke-width="1"/>
<text x="32.0" y="424.0" font-size="21" fill="#f0f0f0" text-anchor="middle">3</text>
<line x1="11.0" y1="459.5" x2="53.0" y2="459.5" stroke="#6e6e6e" stroke-width="1"/>
<text x="32.0" y="453.4" font-size="21" fill="#f0f0f0" text-anchor="middle">4</text>
<line x1="11.0" y1="501.5" x2="53.0" y2="501.5" stroke="#6e6e6e" stroke-width="1"/>
<text x="32.0" y="495.2" font-size="21" fill="#f0f0f0" text-anchor="middle">5</text>
<line x1="11.0" y1="536.5" x2="53.0" y2="536.5" stroke="#6e6e6e" stroke-width="1"/>
<text x="32.0" y="530.5" font-size="21" fill="#f0f0f0" text-anchor="middle">6</text>
<line x1="11.0" y1="565.5" x2="53.0" y2="565.5" stroke="#6e6e6e" stroke-width="1"/>
<text x="32.0" y="559.0" font-size="21" fill="#f0f0f0" text-anchor="middle">7</text>
<line x1="11.0" y1="600.5" x2="53.0" y2="600.5" stroke="#6e6e6e" stroke-width="1"/>
<text x="32.0" y="594.1" font-size="21" fill="#f0f0f0" text-anchor="middle">9</text>
<line x1="11.0" y1="629.5" x2="53.0" y2="629.5" stroke="#6e6e6e" stroke-width="1"/>
<text x="32.0" y="623.2" font-size="21" fill="#f0f0f0" text-anchor="middle">10</text>
<line x1="11.0" y1="658.5" x2="53.0" y2="658.5" stroke="#6e6e6e" stroke-width="1"/>
<text x="32.0" y="652.3" font-size="21" fill="#f0f0f0" text-anchor="middle">11</text>
<line x1="11.0" y1="687.5" x2="53.0" y2="687.5" stroke="#6e6e6e" stroke-width="1"/>
<text x="32.0" y="681.4" font-size="21" fill="#f0f0f0" text-anchor="middle">12</text>
<line x1="11.0" y1="716.5" x2="53.0" y2="716.5" stroke="#6e6e6e" stroke-width="1"/>
<text x="32.0" y="710.5" font-size="21" fill="#f0f0f0" text-anchor="middle">13</text>
<line x1="11.0" y1="745.5" x2="53.0" y2="745.5" stroke="#6e6e6e" stroke-width="1"/>
<text x="32.0" y="739.6" font-size="21" fill="#f0f0f0" text-anchor="middle">14</text>
<line x1="11.0" y1="766.5" x2="53.0" y2="766.5" stroke="#6e6e6e" stroke-width="1"/>
<text x="32.0" y="760.8" font-size="21" fill="#f0f0f0" text-anchor="middle">15</text>
<line x1="11.0" y1="809.5" x2="53.0" y2="809.5" stroke="#6e6e6e" stroke-width="1"/>
<text x="32.0" y="803.6" font-size="21" fill="#f0f0f0" text-anchor="middle">16</text>
<line x1="11.0" y1="838.5" x2="53.0" y2="838.5" stroke="#6e6e6e" stroke-width="1"/>
<text x="32.0" y="832.5" font-size="21" fill="#f0f0f0" text-anchor="middle">17</text>
<line x1="11.0" y1="867.5" x2="53.0" y2="867.5" stroke="#6e6e6e" stroke-width="1"/>
<text x="32.0" y="861.5" font-size="21" fill="#f0f0f0" text-anchor="middle">18</text>
<line x1="11.0" y1="896.5" x2="53.0" y2="896.5" stroke="#6e6e6e" stroke-width="1"/>
<text x="32.0" y="890.5" font-size="21" fill="#f0f0f0" text-anchor="middle">19</text>
<line x1="11.0" y1="925.5" x2="53.0" y2="925.5" stroke="#6e6e6e" stroke-width="1"/>
<text x="32.0" y="919.5" font-size="21" fill="#f0f0f0" text-anchor="middle">20</text>
<line x1="11.0" y1="954.5" x2="53.0" y2="954.5" stroke="#6e6e6e" stroke-width="1"/>
<text x="32.0" y="948.5" font-size="21" fill="#f0f0f0" text-anchor="middle">21</text>
<line x1="11.0" y1="983.5" x2="53.0" y2="983.5" stroke="#6e6e6e" stroke-width="1"/>
<text x="32.0" y="977.5" font-size="21" fill="#f0f0f0" text-anchor="middle">22</text>
<line x1="11.0" y1="1012.5" x2="53.0" y2="1012.5" stroke="#6e6e6e" stroke-width="1"/>
<text x="32.0" y="1006.5" font-size="21" fill="#f0f0f0" text-anchor="middle">23</text>
<line x1="11.0" y1="1041.5" x2="53.0" y2="1041.5" stroke="#6e6e6e" stroke-width="1"/>
<text x="32.0" y="1035.5" font-size="21" fill="#f0f0f0" text-anchor="middle">24</text>
<line x1="11.0" y1="1070.5" x2="53.0" y2="1070.5" stroke="#6e6e6e" stroke-width="1"/>
<text x="32.0" y="1064.5" font-size="21" fill="#f0f0f0" text-anchor="middle">25</text>
<line x1="11.0" y1="1099.5" x2="53.0" y2="1099.5" stroke="#6e6e6e" stroke-width="1"/>
<text x="32.0" y="1093.5" font-size="21" fill="#f0f0f0" text-anchor="middle">26</text>
<line x1="11.0" y1="1128.5" x2="53.0" y2="1128.5" stroke="#6e6e6e" stroke-width="1"/>
<text x="32.0" y="1122.5" font-size="21" fill="#f0f0f0" text-anchor="middle">27</text>
<line x1="11.0" y1="1157.5" x2="53.0" y2="1157.5" stroke="#6e6e6e" stroke-width="1"/>
<text x="32.0" y="1151.5" font-size="21" fill="#f0f0f0" text-anchor="middle">28</text>
<line x1="11.0" y1="1186.5" x2="53.0" y2="1186.5" stroke="#6e6e6e" stroke-width="1"/>
<text x="32.0" y="1180.5" font-size="21" fill="#f0f0f0" text-anchor="middle">29</text>
<line x1="11.0" y1="1215.5" x2="53.0" y2="1215.5" stroke="#6e6e6e" stroke-width="1"/>
<text x="32.0" y="1209.5" font-size="21" fill="#f0f0f0" text-anchor="middle">30</text>
<line x1="11.0" y1="1244.5" x2="53.0" y2="1244.5" stroke="#6e6e6e" stroke-width="1"/>
<text x="32.0" y="1238.5" font-size="21" fill="#f0f0f0" text-anchor="middle">31</text>
<line x1="11.0" y1="1273.5" x2="53.0" y2="1273.5" stroke="#6e6e6e" stroke-width="1"/>
<text x="32.0" y="1267.5" font-size="21" fill="#f0f0f0" text-anchor="middle">32</text>
<line x1="11.0" y1="1302.5" x2="53.0" y2="1302.5" stroke="#6e6e6e" stroke-width="1"/>
<text x="32.0" y="1296.5" font-size="21" fill="#f0f0f0" text-anchor="middle">33</text>
<line x1="11.0" y1="1331.5" x2="53.0" y2="1331.5" stroke="#6e6e6e" stroke-width="1"/>
<text x="32.0" y="1325.5" font-size="21" fill="#f0f0f0" text-anchor="middle">34</text>
<line x1="11.0" y1="1360.5" x2="53.0" y2="1360.5" stroke="#6e6e6e" stroke-width="1"/>
<text x="32.0" y="1354.5" font-size="21" fill="#f0f0f0" text-anchor="middle">35</text>
<line x1="11.0" y1="1389.5" x2="53.0" y2="1389.5" stroke="#6e6e6e" stroke-width="1"/>
<text x="32.0" y="1383.5" font-size="21" fill="#f0f0f0" text-anchor="middle">36</text>
<line x1="11.0" y1="1418.5" x2="53.0" y2="1418.5" stroke="#6e6e6e" stroke-width="1"/>
<text x="32.0" y="1412.5" font-size="21" fill="#f0f0f0" text-anchor="middle">37</text>
<line x1="11.0" y1="1447.5" x2="53.0" y2="1447.5" stroke="#6e6e6e" stroke-width="1"/>
<text x="32.0" y="1441.5" font-size="21" fill="#f0f0f0" text-anchor="middle">38</text>
<line x1="11.0" y1="1476.5" x2="53.0" y2="1476.5" stroke="#6e6e6e" stroke-width="1"/>
<text x="32.0" y="1470.5" font-size="21" fill="#f0f0f0" text-anchor="middle">39</text>
<line x1="11.0" y1="1505.5" x2="53.0" y2="1505.5" stroke="#6e6e6e" stroke-width="1"/>
<text x="32.0" y="1499.5" font-size="21" fill="#f0f0f0" text-anchor="middle">40</text>
<line x1="11.0" y1="1534.5" x2="53.0" y2="1534.5" stroke="#6e6e6e" stroke-width="1"/>
<text x="32.0" y="1528.5" font-size="21" fill="#f0f0f0" text-anchor="middle">41</text>
<line x1="11.0" y1="1577.5" x2="53.0" y2="1577.5" stroke="#6e6e6e" stroke-width="1"/>
<text x="32.0" y="1571.0" font-size="21" fill="#f0f0f0" text-anchor="middle">42</text>
<line x1="11.0" y1="1606.5" x2="53.0" y2="1606.5" stroke="#6e6e6e" stroke-width="1"/>
<text x="32.0" y="1600.0" font-size="21" fill="#f0f0f0" text-anchor="middle">43</text>
<line x1="11.0" y1="1635.5" x2="53.0" y2="1635.5" stroke="#6e6e6e" stroke-width="1"/>
<text x="32.0" y="1629.0" font-size="21" fill="#f0f0f0" text-anchor="middle">44</text>
<line x1="11.0" y1="1664.5" x2="53.0" y2="1664.5" stroke="#6e6e6e" stroke-width="1"/>
<text x="32.0" y="1658.0" font-size="21" fill="#f0f0f0" text-anchor="middle">45</text>
<line x1="11.0" y1="1693.5" x2="53.0" y2="1693.5" stroke="#6e6e6e" stroke-width="1"/>
</g>
<rect x="53.0" y="305.0" width="2807.0" height="1365.0" fill="#fff"/>
<line x1="53.0" y1="305.5" x2="2860.0" y2="305.5" stroke="#9a9a9a" stroke-width="1"/>
<rect x="52.3" y="305.0" width="1.8" height="44.0" fill="#217346"/>
<line x1="53.0" y1="459.4" x2="2860.0" y2="459.4" stroke="#9a9a9a" stroke-width="1"/>
<text x="89.7" y="342.3" font-size="39.5" font-weight="700" fill="#262626" stroke="#262626" stroke-width="0.87" textLength="253.6" lengthAdjust="spacingAndGlyphs">Top Revenue</text>
<text x="89.0" y="381.6" font-size="33.5" font-weight="700" fill="#000" stroke="#000" stroke-width="0.74" textLength="313.2" lengthAdjust="spacingAndGlyphs">ABC Company Inc.</text>
<text x="87.6" y="417.5" font-size="21" font-weight="700" fill="#2f7fef" stroke="#2f7fef" stroke-width="0.46" textLength="257.4" lengthAdjust="spacingAndGlyphs">Go to Table of Contents</text>
<rect x="87.6" y="420.2" width="257.4" height="1.8" fill="#2f7fef"/>
<rect x="83.0" y="459.9" width="2764.0" height="41.1" fill="#4b4fd4"/>
<text x="951.9" y="493.5" font-size="35" font-weight="700" fill="#fff" stroke="#fff" stroke-width="0.77" textLength="1025.7" lengthAdjust="spacingAndGlyphs">Top 5 Revenue Streams ($'000) - 5 years to December 2030</text>
<rect x="83.0" y="537.0" width="1550.0" height="27.7" fill="#6c70e2"/>
<rect x="602.4" y="537.0" width="1.6" height="27.7" fill="#fff"/>
<rect x="808.4" y="537.0" width="1.6" height="27.7" fill="#fff"/>
<rect x="1014.4" y="537.0" width="1.6" height="27.7" fill="#fff"/>
<rect x="1220.4" y="537.0" width="1.6" height="27.7" fill="#fff"/>
<rect x="1426.4" y="537.0" width="1.6" height="27.7" fill="#fff"/>
<text x="97.8" y="558.8" font-size="21" font-weight="700" fill="#fff" stroke="#fff" stroke-width="0.46" textLength="132.6" lengthAdjust="spacingAndGlyphs">Year Ending</text>
<text x="706.0" y="558.8" font-size="21" font-weight="700" fill="#fff" text-anchor="middle" stroke="#fff" stroke-width="0.46" textLength="55.0" lengthAdjust="spacingAndGlyphs">2026</text>
<text x="912.0" y="558.8" font-size="21" font-weight="700" fill="#fff" text-anchor="middle" stroke="#fff" stroke-width="0.46" textLength="55.0" lengthAdjust="spacingAndGlyphs">2027</text>
<text x="1118.0" y="558.8" font-size="21" font-weight="700" fill="#fff" text-anchor="middle" stroke="#fff" stroke-width="0.46" textLength="55.0" lengthAdjust="spacingAndGlyphs">2028</text>
<text x="1324.0" y="558.8" font-size="21" font-weight="700" fill="#fff" text-anchor="middle" stroke="#fff" stroke-width="0.46" textLength="55.0" lengthAdjust="spacingAndGlyphs">2029</text>
<text x="1530.0" y="558.8" font-size="21" font-weight="700" fill="#fff" text-anchor="middle" stroke="#fff" stroke-width="0.46" textLength="55.0" lengthAdjust="spacingAndGlyphs">2030</text>
<rect x="1894.5" y="537.0" width="809.3" height="27.7" fill="#6c70e2"/>
<rect x="2056.1" y="537.0" width="1.6" height="27.7" fill="#fff"/>
<rect x="2217.9" y="537.0" width="1.6" height="27.7" fill="#fff"/>
<rect x="2380.1" y="537.0" width="1.6" height="27.7" fill="#fff"/>
<rect x="2541.9" y="537.0" width="1.6" height="27.7" fill="#fff"/>
<text x="1975.6" y="558.8" font-size="21" font-weight="700" fill="#fff" text-anchor="middle" stroke="#fff" stroke-width="0.46" textLength="55.0" lengthAdjust="spacingAndGlyphs">2026</text>
<text x="2137.6" y="558.8" font-size="21" font-weight="700" fill="#fff" text-anchor="middle" stroke="#fff" stroke-width="0.46" textLength="55.0" lengthAdjust="spacingAndGlyphs">2027</text>
<text x="2299.6" y="558.8" font-size="21" font-weight="700" fill="#fff" text-anchor="middle" stroke="#fff" stroke-width="0.46" textLength="55.0" lengthAdjust="spacingAndGlyphs">2028</text>
<text x="2461.6" y="558.8" font-size="21" font-weight="700" fill="#fff" text-anchor="middle" stroke="#fff" stroke-width="0.46" textLength="55.0" lengthAdjust="spacingAndGlyphs">2029</text>
<text x="2623.6" y="558.8" font-size="21" font-weight="700" fill="#fff" text-anchor="middle" stroke="#fff" stroke-width="0.46" textLength="55.0" lengthAdjust="spacingAndGlyphs">2030</text>
<text x="86.0" y="593.8" font-size="21.5" fill="#000" textLength="145.9" lengthAdjust="spacingAndGlyphs">Personal Loans</text>
<text x="797.3" y="593.8" font-size="21.5" fill="#000" text-anchor="end" textLength="34.5" lengthAdjust="spacingAndGlyphs">284</text>
<text x="1003.3" y="593.8" font-size="21.5" fill="#000" text-anchor="end" textLength="52.6" lengthAdjust="spacingAndGlyphs">1,042</text>
<text x="1209.3" y="593.8" font-size="21.5" fill="#000" text-anchor="end">2,711</text>
<text x="1415.3" y="593.8" font-size="21.5" fill="#000" text-anchor="end" textLength="52.6" lengthAdjust="spacingAndGlyphs">5,306</text>
<text x="1621.3" y="593.8" font-size="21.5" fill="#000" text-anchor="end" textLength="52.6" lengthAdjust="spacingAndGlyphs">7,986</text>
<text x="2041.7" y="593.8" font-size="21.5" font-style="italic" fill="#000" text-anchor="end" textLength="63.4" lengthAdjust="spacingAndGlyphs">26.7%</text>
<text x="2203.5" y="593.8" font-size="21.5" font-style="italic" fill="#000" text-anchor="end" textLength="63.4" lengthAdjust="spacingAndGlyphs">27.2%</text>
<text x="2365.7" y="593.8" font-size="21.5" font-style="italic" fill="#000" text-anchor="end" textLength="63.4" lengthAdjust="spacingAndGlyphs">27.9%</text>
<text x="2527.5" y="593.8" font-size="21.5" font-style="italic" fill="#000" text-anchor="end" textLength="63.4" lengthAdjust="spacingAndGlyphs">27.3%</text>
<text x="2689.6" y="593.8" font-size="21.5" font-style="italic" fill="#000" text-anchor="end" textLength="63.4" lengthAdjust="spacingAndGlyphs">26.4%</text>
<text x="86.0" y="622.6" font-size="21.5" fill="#000" textLength="163.4" lengthAdjust="spacingAndGlyphs">Cash Equivalents</text>
<text x="797.3" y="622.6" font-size="21.5" fill="#000" text-anchor="end" textLength="34.5" lengthAdjust="spacingAndGlyphs">244</text>
<text x="1003.3" y="622.6" font-size="21.5" fill="#000" text-anchor="end" textLength="34.5" lengthAdjust="spacingAndGlyphs">761</text>
<text x="1209.3" y="622.6" font-size="21.5" fill="#000" text-anchor="end" textLength="52.6" lengthAdjust="spacingAndGlyphs">1,758</text>
<text x="1415.3" y="622.6" font-size="21.5" fill="#000" text-anchor="end" textLength="52.6" lengthAdjust="spacingAndGlyphs">3,515</text>
<text x="1621.3" y="622.6" font-size="21.5" fill="#000" text-anchor="end" textLength="52.6" lengthAdjust="spacingAndGlyphs">5,338</text>
<text x="2041.7" y="622.6" font-size="21.5" font-style="italic" fill="#000" text-anchor="end" textLength="63.4" lengthAdjust="spacingAndGlyphs">22.9%</text>
<text x="2203.5" y="622.6" font-size="21.5" font-style="italic" fill="#000" text-anchor="end" textLength="63.4" lengthAdjust="spacingAndGlyphs">19.9%</text>
<text x="2365.7" y="622.6" font-size="21.5" font-style="italic" fill="#000" text-anchor="end" textLength="63.4" lengthAdjust="spacingAndGlyphs">18.1%</text>
<text x="2527.5" y="622.6" font-size="21.5" font-style="italic" fill="#000" text-anchor="end" textLength="63.4" lengthAdjust="spacingAndGlyphs">18.1%</text>
<text x="2689.6" y="622.6" font-size="21.5" font-style="italic" fill="#000" text-anchor="end" textLength="63.4" lengthAdjust="spacingAndGlyphs">17.6%</text>
<text x="86.0" y="651.6" font-size="21.5" fill="#000" textLength="206.5" lengthAdjust="spacingAndGlyphs">Small Business Loans</text>
<text x="797.3" y="651.6" font-size="21.5" fill="#000" text-anchor="end" textLength="34.5" lengthAdjust="spacingAndGlyphs">146</text>
<text x="1003.3" y="651.6" font-size="21.5" fill="#000" text-anchor="end" textLength="34.5" lengthAdjust="spacingAndGlyphs">577</text>
<text x="1209.3" y="651.6" font-size="21.5" fill="#000" text-anchor="end" textLength="52.6" lengthAdjust="spacingAndGlyphs">1,450</text>
<text x="1415.3" y="651.6" font-size="21.5" fill="#000" text-anchor="end" textLength="52.6" lengthAdjust="spacingAndGlyphs">2,891</text>
<text x="1621.3" y="651.6" font-size="21.5" fill="#000" text-anchor="end" textLength="52.6" lengthAdjust="spacingAndGlyphs">4,638</text>
<text x="2041.7" y="651.6" font-size="21.5" font-style="italic" fill="#000" text-anchor="end" textLength="63.4" lengthAdjust="spacingAndGlyphs">13.8%</text>
<text x="2203.5" y="651.6" font-size="21.5" font-style="italic" fill="#000" text-anchor="end" textLength="63.4" lengthAdjust="spacingAndGlyphs">15.1%</text>
<text x="2365.7" y="651.6" font-size="21.5" font-style="italic" fill="#000" text-anchor="end" textLength="63.4" lengthAdjust="spacingAndGlyphs">14.9%</text>
<text x="2527.5" y="651.6" font-size="21.5" font-style="italic" fill="#000" text-anchor="end" textLength="63.4" lengthAdjust="spacingAndGlyphs">14.9%</text>
<text x="2689.6" y="651.6" font-size="21.5" font-style="italic" fill="#000" text-anchor="end" textLength="63.4" lengthAdjust="spacingAndGlyphs">15.3%</text>
<text x="86.0" y="680.3" font-size="21.5" fill="#000" textLength="201.9" lengthAdjust="spacingAndGlyphs">Short-Term Securities</text>
<text x="797.3" y="680.3" font-size="21.5" fill="#000" text-anchor="end" textLength="34.5" lengthAdjust="spacingAndGlyphs">135</text>
<text x="1003.3" y="680.3" font-size="21.5" fill="#000" text-anchor="end" textLength="34.5" lengthAdjust="spacingAndGlyphs">500</text>
<text x="1209.3" y="680.3" font-size="21.5" fill="#000" text-anchor="end" textLength="52.6" lengthAdjust="spacingAndGlyphs">1,284</text>
<text x="1415.3" y="680.3" font-size="21.5" fill="#000" text-anchor="end" textLength="52.6" lengthAdjust="spacingAndGlyphs">2,590</text>
<text x="1621.3" y="680.3" font-size="21.5" fill="#000" text-anchor="end" textLength="52.6" lengthAdjust="spacingAndGlyphs">4,067</text>
<text x="2041.7" y="680.3" font-size="21.5" font-style="italic" fill="#000" text-anchor="end" textLength="63.4" lengthAdjust="spacingAndGlyphs">12.7%</text>
<text x="2203.5" y="680.3" font-size="21.5" font-style="italic" fill="#000" text-anchor="end" textLength="63.4" lengthAdjust="spacingAndGlyphs">13.1%</text>
<text x="2365.7" y="680.3" font-size="21.5" font-style="italic" fill="#000" text-anchor="end" textLength="63.4" lengthAdjust="spacingAndGlyphs">13.2%</text>
<text x="2527.5" y="680.3" font-size="21.5" font-style="italic" fill="#000" text-anchor="end" textLength="63.4" lengthAdjust="spacingAndGlyphs">13.3%</text>
<text x="2689.6" y="680.3" font-size="21.5" font-style="italic" fill="#000" text-anchor="end" textLength="63.4" lengthAdjust="spacingAndGlyphs">13.4%</text>
<text x="86.0" y="709.3" font-size="21.5" fill="#000" textLength="142.4" lengthAdjust="spacingAndGlyphs">Other Revenue</text>
<text x="797.3" y="709.3" font-size="21.5" fill="#000" text-anchor="end" textLength="34.5" lengthAdjust="spacingAndGlyphs">254</text>
<text x="1003.3" y="709.3" font-size="21.5" fill="#000" text-anchor="end" textLength="34.5" lengthAdjust="spacingAndGlyphs">944</text>
<text x="1209.3" y="709.3" font-size="21.5" fill="#000" text-anchor="end" textLength="52.6" lengthAdjust="spacingAndGlyphs">2,528</text>
<text x="1415.3" y="709.3" font-size="21.5" fill="#000" text-anchor="end" textLength="52.6" lengthAdjust="spacingAndGlyphs">5,137</text>
<text x="1621.3" y="709.3" font-size="21.5" fill="#000" text-anchor="end" textLength="52.6" lengthAdjust="spacingAndGlyphs">8,218</text>
<text x="2041.7" y="709.3" font-size="21.5" font-style="italic" fill="#000" text-anchor="end" textLength="63.4" lengthAdjust="spacingAndGlyphs">23.8%</text>
<text x="2203.5" y="709.3" font-size="21.5" font-style="italic" fill="#000" text-anchor="end" textLength="63.4" lengthAdjust="spacingAndGlyphs">24.7%</text>
<text x="2365.7" y="709.3" font-size="21.5" font-style="italic" fill="#000" text-anchor="end" textLength="63.4" lengthAdjust="spacingAndGlyphs">26.0%</text>
<text x="2527.5" y="709.3" font-size="21.5" font-style="italic" fill="#000" text-anchor="end" textLength="63.4" lengthAdjust="spacingAndGlyphs">26.4%</text>
<text x="2689.6" y="709.3" font-size="21.5" font-style="italic" fill="#000" text-anchor="end" textLength="63.4" lengthAdjust="spacingAndGlyphs">27.2%</text>
<rect x="82.5" y="716.1" width="1550.5" height="29.5" fill="#4ab2e6"/>
<rect x="1894.5" y="716.1" width="809.3" height="29.5" fill="#4ab2e6"/>
<text x="98.4" y="740.0" font-size="25" font-weight="700" fill="#fff" stroke="#fff" stroke-width="0.55" textLength="178.4" lengthAdjust="spacingAndGlyphs">Total Revenue</text>
<text x="794.3" y="738.5" font-size="21" font-weight="700" fill="#fff" text-anchor="end" stroke="#fff" stroke-width="0.46" textLength="60.9" lengthAdjust="spacingAndGlyphs">1,063</text>
<text x="1000.3" y="738.5" font-size="21" font-weight="700" fill="#fff" text-anchor="end" stroke="#fff" stroke-width="0.46" textLength="60.9" lengthAdjust="spacingAndGlyphs">3,824</text>
<text x="1206.3" y="738.5" font-size="21" font-weight="700" fill="#fff" text-anchor="end" stroke="#fff" stroke-width="0.46" textLength="60.9" lengthAdjust="spacingAndGlyphs">9,732</text>
<text x="1412.3" y="738.5" font-size="21" font-weight="700" fill="#fff" text-anchor="end" stroke="#fff" stroke-width="0.46" textLength="76.1" lengthAdjust="spacingAndGlyphs">19,439</text>
<text x="1618.3" y="738.5" font-size="21" font-weight="700" fill="#fff" text-anchor="end" stroke="#fff" stroke-width="0.46" textLength="76.1" lengthAdjust="spacingAndGlyphs">30,247</text>
<text x="2049.2" y="738.5" font-size="21" font-weight="700" font-style="italic" fill="#fff" text-anchor="end" stroke="#fff" stroke-width="0.46" textLength="67.6" lengthAdjust="spacingAndGlyphs">100%</text>
<text x="2211.0" y="738.5" font-size="21" font-weight="700" font-style="italic" fill="#fff" text-anchor="end" stroke="#fff" stroke-width="0.46" textLength="67.6" lengthAdjust="spacingAndGlyphs">100%</text>
<text x="2373.2" y="738.5" font-size="21" font-weight="700" font-style="italic" fill="#fff" text-anchor="end" stroke="#fff" stroke-width="0.46" textLength="67.6" lengthAdjust="spacingAndGlyphs">100%</text>
<text x="2535.0" y="738.5" font-size="21" font-weight="700" font-style="italic" fill="#fff" text-anchor="end" stroke="#fff" stroke-width="0.46" textLength="67.6" lengthAdjust="spacingAndGlyphs">100%</text>
<text x="2697.1" y="738.5" font-size="21" font-weight="700" font-style="italic" fill="#fff" text-anchor="end" stroke="#fff" stroke-width="0.46" textLength="67.6" lengthAdjust="spacingAndGlyphs">100%</text>
<rect x="83.0" y="767.0" width="2764.0" height="41.8" fill="#4b4fd4"/>
<text x="951.9" y="800.8" font-size="35" font-weight="700" fill="#fff" stroke="#fff" stroke-width="0.77" textLength="1025.7" lengthAdjust="spacingAndGlyphs">Top 5 Revenue Streams ($'000) - 5 years to December 2030</text>
<rect x="83.0" y="1534.7" width="2764.0" height="42.0" fill="#4b4fd4"/>
<rect x="1838.4" y="1534.7" width="1.4" height="42.0" fill="#fff"/>
<text x="961.0" y="1568.5" font-size="35" font-weight="700" fill="#fff" text-anchor="middle" stroke="#fff" stroke-width="0.77" textLength="519.0" lengthAdjust="spacingAndGlyphs">Revenue Depth ($'000) - 2026</text>
<text x="2343.0" y="1568.5" font-size="35" font-weight="700" fill="#fff" text-anchor="middle" stroke="#fff" stroke-width="0.77" textLength="571.2" lengthAdjust="spacingAndGlyphs">Monthly Run-Rate ($'000) - 2026</text>
<rect x="2542" y="1577.5" width="305" height="27.5" fill="#fdf06e" stroke="#c8c8c8" stroke-width="1"/>
<text x="2694.5" y="1599.5" font-size="21" font-weight="700" fill="#111" text-anchor="middle" stroke="#111" stroke-width="0.46" textLength="55.0" lengthAdjust="spacingAndGlyphs">2026</text>
<line x1="176.5" y1="1489.5" x2="1632.8" y2="1489.5" stroke="#5a70a4" stroke-width="1"/>
<line x1="176.5" y1="1425.5" x2="1632.8" y2="1425.5" stroke="#5a70a4" stroke-width="1"/>
<line x1="176.5" y1="1361.5" x2="1632.8" y2="1361.5" stroke="#5a70a4" stroke-width="1"/>
<line x1="176.5" y1="1297.5" x2="1632.8" y2="1297.5" stroke="#5a70a4" stroke-width="1"/>
<line x1="176.5" y1="1233.5" x2="1632.8" y2="1233.5" stroke="#5a70a4" stroke-width="1"/>
<line x1="176.5" y1="1170.5" x2="1632.8" y2="1170.5" stroke="#5a70a4" stroke-width="1"/>
<line x1="176.5" y1="1106.5" x2="1632.8" y2="1106.5" stroke="#5a70a4" stroke-width="1"/>
<line x1="176.5" y1="1042.5" x2="1632.8" y2="1042.5" stroke="#5a70a4" stroke-width="1"/>
<line x1="176.5" y1="978.5" x2="1632.8" y2="978.5" stroke="#5a70a4" stroke-width="1"/>
<line x1="176.5" y1="914.5" x2="1632.8" y2="914.5" stroke="#5a70a4" stroke-width="1"/>
<line x1="176.5" y1="851.5" x2="1632.8" y2="851.5" stroke="#5a70a4" stroke-width="1"/>
<text x="154.6" y="1496.9" font-size="21.5" font-weight="700" fill="#000" text-anchor="end" stroke="#000" stroke-width="0.47" textLength="40.6" lengthAdjust="spacingAndGlyphs">0%</text>
<text x="154.6" y="1433.1" font-size="21.5" font-weight="700" fill="#000" text-anchor="end" stroke="#000" stroke-width="0.47" textLength="54.1" lengthAdjust="spacingAndGlyphs">10%</text>
<text x="154.6" y="1369.3" font-size="21.5" font-weight="700" fill="#000" text-anchor="end" stroke="#000" stroke-width="0.47" textLength="54.1" lengthAdjust="spacingAndGlyphs">20%</text>
<text x="154.6" y="1305.5" font-size="21.5" font-weight="700" fill="#000" text-anchor="end" stroke="#000" stroke-width="0.47" textLength="54.1" lengthAdjust="spacingAndGlyphs">30%</text>
<text x="154.6" y="1241.7" font-size="21.5" font-weight="700" fill="#000" text-anchor="end" stroke="#000" stroke-width="0.47" textLength="54.1" lengthAdjust="spacingAndGlyphs">40%</text>
<text x="154.6" y="1177.9" font-size="21.5" font-weight="700" fill="#000" text-anchor="end" stroke="#000" stroke-width="0.47" textLength="54.1" lengthAdjust="spacingAndGlyphs">50%</text>
<text x="154.6" y="1114.0" font-size="21.5" font-weight="700" fill="#000" text-anchor="end" stroke="#000" stroke-width="0.47" textLength="54.1" lengthAdjust="spacingAndGlyphs">60%</text>
<text x="154.6" y="1050.2" font-size="21.5" font-weight="700" fill="#000" text-anchor="end" stroke="#000" stroke-width="0.47" textLength="54.1" lengthAdjust="spacingAndGlyphs">70%</text>
<text x="154.6" y="986.4" font-size="21.5" font-weight="700" fill="#000" text-anchor="end" stroke="#000" stroke-width="0.47" textLength="54.1" lengthAdjust="spacingAndGlyphs">80%</text>
<text x="154.6" y="922.6" font-size="21.5" font-weight="700" fill="#000" text-anchor="end" stroke="#000" stroke-width="0.47" textLength="54.1" lengthAdjust="spacingAndGlyphs">90%</text>
<text x="154.6" y="858.8" font-size="21.5" font-weight="700" fill="#000" text-anchor="end" stroke="#000" stroke-width="0.47" textLength="67.7" lengthAdjust="spacingAndGlyphs">100%</text>
<rect x="225.0" y="1318.7" width="194.5" height="170.5" fill="#4cb2e6"/>
<rect x="225.0" y="1172.3" width="194.5" height="146.5" fill="#4e52d4"/>
<rect x="225.0" y="1084.6" width="194.5" height="87.6" fill="#f07b6f"/>
<rect x="225.0" y="1003.6" width="194.5" height="81.0" fill="#f3b400"/>
<rect x="225.0" y="851.1" width="194.5" height="152.5" fill="#2eb5a8"/>
<rect x="292.7" y="1386.0" width="59.0" height="36.0" fill="#dcebf6"/>
<text x="322.2" y="1412.0" font-size="21.5" font-weight="700" fill="#000" text-anchor="middle" stroke="#000" stroke-width="0.47" textLength="40.7" lengthAdjust="spacingAndGlyphs">284</text>
<rect x="292.7" y="1227.5" width="59.0" height="36.0" fill="#aaacec"/>
<text x="322.2" y="1253.5" font-size="21.5" font-weight="700" fill="#000" text-anchor="middle" stroke="#000" stroke-width="0.47" textLength="40.7" lengthAdjust="spacingAndGlyphs">244</text>
<rect x="292.7" y="1110.4" width="59.0" height="36.0" fill="#f9d4bf"/>
<text x="322.2" y="1136.4" font-size="21.5" font-weight="700" fill="#000" text-anchor="middle" stroke="#000" stroke-width="0.47" textLength="40.7" lengthAdjust="spacingAndGlyphs">146</text>
<rect x="292.7" y="1026.1" width="59.0" height="36.0" fill="#fdf3d6"/>
<text x="322.2" y="1052.1" font-size="21.5" font-weight="700" fill="#000" text-anchor="middle" stroke="#000" stroke-width="0.47" textLength="40.7" lengthAdjust="spacingAndGlyphs">135</text>
<rect x="292.7" y="909.3" width="59.0" height="36.0" fill="#e0efdf"/>
<text x="322.2" y="935.3" font-size="21.5" font-weight="700" fill="#000" text-anchor="middle" stroke="#000" stroke-width="0.47" textLength="40.7" lengthAdjust="spacingAndGlyphs">254</text>
<text x="322.2" y="1525.6" font-size="21.5" font-weight="700" fill="#000" text-anchor="middle" stroke="#000" stroke-width="0.47" textLength="55.0" lengthAdjust="spacingAndGlyphs">2026</text>
<rect x="516.2" y="1315.3" width="194.5" height="173.9" fill="#4cb2e6"/>
<rect x="516.2" y="1188.3" width="194.5" height="127.0" fill="#4e52d4"/>
<rect x="516.2" y="1092.1" width="194.5" height="96.3" fill="#f07b6f"/>
<rect x="516.2" y="1008.6" width="194.5" height="83.4" fill="#f3b400"/>
<rect x="516.2" y="851.1" width="194.5" height="157.5" fill="#2eb5a8"/>
<rect x="573.1" y="1384.3" width="80.8" height="36.0" fill="#dcebf6"/>
<text x="613.5" y="1410.3" font-size="21.5" font-weight="700" fill="#000" text-anchor="middle" stroke="#000" stroke-width="0.47" textLength="62.5" lengthAdjust="spacingAndGlyphs">1,042</text>
<rect x="583.9" y="1233.8" width="59.0" height="36.0" fill="#aaacec"/>
<text x="613.5" y="1259.8" font-size="21.5" font-weight="700" fill="#000" text-anchor="middle" stroke="#000" stroke-width="0.47" textLength="40.7" lengthAdjust="spacingAndGlyphs">761</text>
<rect x="583.9" y="1122.2" width="59.0" height="36.0" fill="#f9d4bf"/>
<text x="613.5" y="1148.2" font-size="21.5" font-weight="700" fill="#000" text-anchor="middle" stroke="#000" stroke-width="0.47" textLength="40.7" lengthAdjust="spacingAndGlyphs">577</text>
<rect x="583.9" y="1032.3" width="59.0" height="36.0" fill="#fdf3d6"/>
<text x="613.5" y="1058.3" font-size="21.5" font-weight="700" fill="#000" text-anchor="middle" stroke="#000" stroke-width="0.47" textLength="40.7" lengthAdjust="spacingAndGlyphs">500</text>
<rect x="583.9" y="911.9" width="59.0" height="36.0" fill="#e0efdf"/>
<text x="613.5" y="937.9" font-size="21.5" font-weight="700" fill="#000" text-anchor="middle" stroke="#000" stroke-width="0.47" textLength="40.7" lengthAdjust="spacingAndGlyphs">944</text>
<text x="613.5" y="1525.6" font-size="21.5" font-weight="700" fill="#000" text-anchor="middle" stroke="#000" stroke-width="0.47" textLength="55.0" lengthAdjust="spacingAndGlyphs">2027</text>
<rect x="807.5" y="1311.4" width="194.5" height="177.8" fill="#4cb2e6"/>
<rect x="807.5" y="1196.2" width="194.5" height="115.3" fill="#4e52d4"/>
<rect x="807.5" y="1101.1" width="194.5" height="95.1" fill="#f07b6f"/>
<rect x="807.5" y="1016.9" width="194.5" height="84.2" fill="#f3b400"/>
<rect x="807.5" y="851.2" width="194.5" height="165.8" fill="#2eb5a8"/>
<rect x="864.3" y="1382.3" width="80.8" height="36.0" fill="#dcebf6"/>
<text x="904.7" y="1408.3" font-size="21.5" font-weight="700" fill="#000" text-anchor="middle" stroke="#000" stroke-width="0.47" textLength="62.5" lengthAdjust="spacingAndGlyphs">2,711</text>
<rect x="864.3" y="1235.8" width="80.8" height="36.0" fill="#aaacec"/>
<text x="904.7" y="1261.8" font-size="21.5" font-weight="700" fill="#000" text-anchor="middle" stroke="#000" stroke-width="0.47" textLength="62.5" lengthAdjust="spacingAndGlyphs">1,758</text>
<rect x="864.3" y="1130.6" width="80.8" height="36.0" fill="#f9d4bf"/>
<text x="904.7" y="1156.6" font-size="21.5" font-weight="700" fill="#000" text-anchor="middle" stroke="#000" stroke-width="0.47" textLength="62.5" lengthAdjust="spacingAndGlyphs">1,450</text>
<rect x="864.3" y="1041.0" width="80.8" height="36.0" fill="#fdf3d6"/>
<text x="904.7" y="1067.0" font-size="21.5" font-weight="700" fill="#000" text-anchor="middle" stroke="#000" stroke-width="0.47" textLength="62.5" lengthAdjust="spacingAndGlyphs">1,284</text>
<rect x="864.3" y="916.0" width="80.8" height="36.0" fill="#e0efdf"/>
<text x="904.7" y="942.0" font-size="21.5" font-weight="700" fill="#000" text-anchor="middle" stroke="#000" stroke-width="0.47" textLength="62.5" lengthAdjust="spacingAndGlyphs">2,528</text>
<text x="904.7" y="1525.6" font-size="21.5" font-weight="700" fill="#000" text-anchor="middle" stroke="#000" stroke-width="0.47" textLength="55.0" lengthAdjust="spacingAndGlyphs">2028</text>
<rect x="1098.8" y="1315.0" width="194.5" height="174.2" fill="#4cb2e6"/>
<rect x="1098.8" y="1199.6" width="194.5" height="115.4" fill="#4e52d4"/>
<rect x="1098.8" y="1104.7" width="194.5" height="94.9" fill="#f07b6f"/>
<rect x="1098.8" y="1019.7" width="194.5" height="85.0" fill="#f3b400"/>
<rect x="1098.8" y="851.1" width="194.5" height="168.6" fill="#2eb5a8"/>
<rect x="1155.6" y="1384.1" width="80.8" height="36.0" fill="#dcebf6"/>
<text x="1196.0" y="1410.1" font-size="21.5" font-weight="700" fill="#000" text-anchor="middle" stroke="#000" stroke-width="0.47" textLength="62.5" lengthAdjust="spacingAndGlyphs">5,306</text>
<rect x="1155.6" y="1239.3" width="80.8" height="36.0" fill="#aaacec"/>
<text x="1196.0" y="1265.3" font-size="21.5" font-weight="700" fill="#000" text-anchor="middle" stroke="#000" stroke-width="0.47" textLength="62.5" lengthAdjust="spacingAndGlyphs">3,515</text>
<rect x="1155.6" y="1134.2" width="80.8" height="36.0" fill="#f9d4bf"/>
<text x="1196.0" y="1160.2" font-size="21.5" font-weight="700" fill="#000" text-anchor="middle" stroke="#000" stroke-width="0.47" textLength="62.5" lengthAdjust="spacingAndGlyphs">2,891</text>
<rect x="1155.6" y="1044.2" width="80.8" height="36.0" fill="#fdf3d6"/>
<text x="1196.0" y="1070.2" font-size="21.5" font-weight="700" fill="#000" text-anchor="middle" stroke="#000" stroke-width="0.47" textLength="62.5" lengthAdjust="spacingAndGlyphs">2,590</text>
<rect x="1155.6" y="917.4" width="80.8" height="36.0" fill="#e0efdf"/>
<text x="1196.0" y="943.4" font-size="21.5" font-weight="700" fill="#000" text-anchor="middle" stroke="#000" stroke-width="0.47" textLength="62.5" lengthAdjust="spacingAndGlyphs">5,137</text>
<text x="1196.0" y="1525.6" font-size="21.5" font-weight="700" fill="#000" text-anchor="middle" stroke="#000" stroke-width="0.47" textLength="55.0" lengthAdjust="spacingAndGlyphs">2029</text>
<rect x="1390.0" y="1320.7" width="194.5" height="168.5" fill="#4cb2e6"/>
<rect x="1390.0" y="1208.1" width="194.5" height="112.6" fill="#4e52d4"/>
<rect x="1390.0" y="1110.3" width="194.5" height="97.8" fill="#f07b6f"/>
<rect x="1390.0" y="1024.5" width="194.5" height="85.8" fill="#f3b400"/>
<rect x="1390.0" y="851.1" width="194.5" height="173.4" fill="#2eb5a8"/>
<rect x="1446.8" y="1387.0" width="80.8" height="36.0" fill="#dcebf6"/>
<text x="1487.2" y="1413.0" font-size="21.5" font-weight="700" fill="#000" text-anchor="middle" stroke="#000" stroke-width="0.47" textLength="62.5" lengthAdjust="spacingAndGlyphs">7,986</text>
<rect x="1446.8" y="1246.4" width="80.8" height="36.0" fill="#aaacec"/>
<text x="1487.2" y="1272.4" font-size="21.5" font-weight="700" fill="#000" text-anchor="middle" stroke="#000" stroke-width="0.47" textLength="62.5" lengthAdjust="spacingAndGlyphs">5,338</text>
<rect x="1446.8" y="1141.2" width="80.8" height="36.0" fill="#f9d4bf"/>
<text x="1487.2" y="1167.2" font-size="21.5" font-weight="700" fill="#000" text-anchor="middle" stroke="#000" stroke-width="0.47" textLength="62.5" lengthAdjust="spacingAndGlyphs">4,638</text>
<rect x="1446.8" y="1049.4" width="80.8" height="36.0" fill="#fdf3d6"/>
<text x="1487.2" y="1075.4" font-size="21.5" font-weight="700" fill="#000" text-anchor="middle" stroke="#000" stroke-width="0.47" textLength="62.5" lengthAdjust="spacingAndGlyphs">4,067</text>
<rect x="1446.8" y="919.8" width="80.8" height="36.0" fill="#e0efdf"/>
<text x="1487.2" y="945.8" font-size="21.5" font-weight="700" fill="#000" text-anchor="middle" stroke="#000" stroke-width="0.47" textLength="62.5" lengthAdjust="spacingAndGlyphs">8,218</text>
<text x="1487.2" y="1525.6" font-size="21.5" font-weight="700" fill="#000" text-anchor="middle" stroke="#000" stroke-width="0.47" textLength="55.0" lengthAdjust="spacingAndGlyphs">2030</text>
<line x1="1643" y1="889" x2="1699" y2="889" stroke="#4cb2e6" stroke-width="4" stroke-linecap="round"/>
<line x1="1643" y1="1020.8" x2="1699" y2="1020.8" stroke="#4e52d4" stroke-width="4" stroke-linecap="round"/>
<line x1="1643" y1="1152.5" x2="1699" y2="1152.5" stroke="#f07b6f" stroke-width="4" stroke-linecap="round"/>
<line x1="1643" y1="1284.6" x2="1699" y2="1284.6" stroke="#f3b400" stroke-width="4" stroke-linecap="round"/>
<line x1="1643" y1="1416.7" x2="1699" y2="1416.7" stroke="#2eb5a8" stroke-width="4" stroke-linecap="round"/>
<circle cx="1670.5" cy="889" r="5" fill="#4cb2e6"/>
<rect x="1665.0" y="1015.3" width="11.0" height="11.0" fill="#4e52d4"/>
<path d="M1665 1158 L1670.5 1148 L1676 1158 Z" fill="#f07b6f"/>
<path d="M1665.5 1279.6 L1675.5 1289.6 M1675.5 1279.6 L1665.5 1289.6" stroke="#f3b400" stroke-width="1.6"/>
<rect x="1665.0" y="1411.2" width="11.0" height="11.0" fill="#4eae74"/>
<text x="1703.8" y="896.6" font-size="22" font-weight="700" fill="#000" stroke="#000" stroke-width="0.48" textLength="169.5" lengthAdjust="spacingAndGlyphs">Personal Loans</text>
<text x="1703.8" y="1028.4" font-size="22" font-weight="700" fill="#000" stroke="#000" stroke-width="0.48" textLength="190.5" lengthAdjust="spacingAndGlyphs">Cash Equivalents</text>
<text x="1703.8" y="1159.9" font-size="22" font-weight="700" fill="#000" stroke="#000" stroke-width="0.48" textLength="239.0" lengthAdjust="spacingAndGlyphs">Small Business Loans</text>
<text x="1703.8" y="1292.0" font-size="22" font-weight="700" fill="#000" stroke="#000" stroke-width="0.48" textLength="127.7" lengthAdjust="spacingAndGlyphs">Short-Term</text>
<text x="1703.8" y="1318.8" font-size="22" font-weight="700" fill="#000" stroke="#000" stroke-width="0.48" textLength="109.6" lengthAdjust="spacingAndGlyphs">Securities</text>
<text x="1703.8" y="1424.0" font-size="22" font-weight="700" fill="#000" stroke="#000" stroke-width="0.48" textLength="167.0" lengthAdjust="spacingAndGlyphs">Other Revenue</text>
<line x1="2069.8" y1="1487.5" x2="2846.6" y2="1487.5" stroke="#6ea5c2" stroke-width="1"/>
<text x="2040.4" y="1494.8" font-size="21.5" font-weight="700" fill="#000" text-anchor="end" stroke="#000" stroke-width="0.47">-</text>
<line x1="2069.8" y1="1416.5" x2="2846.6" y2="1416.5" stroke="#6ea5c2" stroke-width="1"/>
<text x="2040.4" y="1424.1" font-size="21.5" font-weight="700" fill="#000" text-anchor="end" stroke="#000" stroke-width="0.47" textLength="62.0" lengthAdjust="spacingAndGlyphs">1,000</text>
<line x1="2069.8" y1="1346.5" x2="2846.6" y2="1346.5" stroke="#6ea5c2" stroke-width="1"/>
<text x="2040.4" y="1353.4" font-size="21.5" font-weight="700" fill="#000" text-anchor="end" stroke="#000" stroke-width="0.47" textLength="62.0" lengthAdjust="spacingAndGlyphs">2,000</text>
<line x1="2069.8" y1="1275.5" x2="2846.6" y2="1275.5" stroke="#6ea5c2" stroke-width="1"/>
<text x="2040.4" y="1282.7" font-size="21.5" font-weight="700" fill="#000" text-anchor="end" stroke="#000" stroke-width="0.47" textLength="62.0" lengthAdjust="spacingAndGlyphs">3,000</text>
<line x1="2069.8" y1="1204.5" x2="2846.6" y2="1204.5" stroke="#6ea5c2" stroke-width="1"/>
<text x="2040.4" y="1212.0" font-size="21.5" font-weight="700" fill="#000" text-anchor="end" stroke="#000" stroke-width="0.47" textLength="62.0" lengthAdjust="spacingAndGlyphs">4,000</text>
<line x1="2069.8" y1="1134.5" x2="2846.6" y2="1134.5" stroke="#6ea5c2" stroke-width="1"/>
<text x="2040.4" y="1141.3" font-size="21.5" font-weight="700" fill="#000" text-anchor="end" stroke="#000" stroke-width="0.47" textLength="62.0" lengthAdjust="spacingAndGlyphs">5,000</text>
<line x1="2069.8" y1="1063.5" x2="2846.6" y2="1063.5" stroke="#6ea5c2" stroke-width="1"/>
<text x="2040.4" y="1070.6" font-size="21.5" font-weight="700" fill="#000" text-anchor="end" stroke="#000" stroke-width="0.47" textLength="62.0" lengthAdjust="spacingAndGlyphs">6,000</text>
<line x1="2069.8" y1="992.5" x2="2846.6" y2="992.5" stroke="#6ea5c2" stroke-width="1"/>
<text x="2040.4" y="999.9" font-size="21.5" font-weight="700" fill="#000" text-anchor="end" stroke="#000" stroke-width="0.47" textLength="62.0" lengthAdjust="spacingAndGlyphs">7,000</text>
<line x1="2069.8" y1="921.5" x2="2846.6" y2="921.5" stroke="#6ea5c2" stroke-width="1"/>
<text x="2040.4" y="929.2" font-size="21.5" font-weight="700" fill="#000" text-anchor="end" stroke="#000" stroke-width="0.47" textLength="62.0" lengthAdjust="spacingAndGlyphs">8,000</text>
<line x1="2069.8" y1="851.5" x2="2846.6" y2="851.5" stroke="#6ea5c2" stroke-width="1"/>
<text x="2040.4" y="858.5" font-size="21.5" font-weight="700" fill="#000" text-anchor="end" stroke="#000" stroke-width="0.47" textLength="62.0" lengthAdjust="spacingAndGlyphs">9,000</text>
<text x="2146.5" y="1525.0" font-size="21.5" font-weight="700" fill="#000" text-anchor="middle" stroke="#000" stroke-width="0.47" textLength="55.4" lengthAdjust="spacingAndGlyphs">2026</text>
<text x="2302.1" y="1525.0" font-size="21.5" font-weight="700" fill="#000" text-anchor="middle" stroke="#000" stroke-width="0.47" textLength="55.4" lengthAdjust="spacingAndGlyphs">2027</text>
<text x="2457.7" y="1525.0" font-size="21.5" font-weight="700" fill="#000" text-anchor="middle" stroke="#000" stroke-width="0.47" textLength="55.4" lengthAdjust="spacingAndGlyphs">2028</text>
<text x="2613.3" y="1525.0" font-size="21.5" font-weight="700" fill="#000" text-anchor="middle" stroke="#000" stroke-width="0.47" textLength="55.4" lengthAdjust="spacingAndGlyphs">2029</text>
<text x="2768.9" y="1525.0" font-size="21.5" font-weight="700" fill="#000" text-anchor="middle" stroke="#000" stroke-width="0.47" textLength="55.4" lengthAdjust="spacingAndGlyphs">2030</text>
<polyline points="2146.5,1467.4 2302.1,1413.8 2457.7,1295.8 2613.3,1112.4 2768.9,922.9" fill="none" stroke="#4cb2e6" stroke-width="4" stroke-linejoin="round"/>
<circle cx="2146.5" cy="1467.4" r="6.9" fill="#4cb2e6"/>
<circle cx="2302.1" cy="1413.8" r="6.9" fill="#4cb2e6"/>
<circle cx="2457.7" cy="1295.8" r="6.9" fill="#4cb2e6"/>
<circle cx="2613.3" cy="1112.4" r="6.9" fill="#4cb2e6"/>
<circle cx="2768.9" cy="922.9" r="6.9" fill="#4cb2e6"/>
<polyline points="2146.5,1470.2 2302.1,1433.7 2457.7,1363.2 2613.3,1239.0 2768.9,1110.1" fill="none" stroke="#4e52d4" stroke-width="4" stroke-linejoin="round"/>
<rect x="2138.0" y="1461.7" width="17.0" height="17.0" fill="#4e52d4"/>
<rect x="2293.6" y="1425.2" width="17.0" height="17.0" fill="#4e52d4"/>
<rect x="2449.2" y="1354.7" width="17.0" height="17.0" fill="#4e52d4"/>
<rect x="2604.8" y="1230.5" width="17.0" height="17.0" fill="#4e52d4"/>
<rect x="2760.4" y="1101.6" width="17.0" height="17.0" fill="#4e52d4"/>
<polyline points="2146.5,1477.2 2302.1,1446.7 2457.7,1385.0 2613.3,1283.1 2768.9,1159.6" fill="none" stroke="#f07b6f" stroke-width="4" stroke-linejoin="round"/>
<path d="M2138.0 1485.7 L2146.5 1468.7 L2155.0 1485.7 Z" fill="#f07b6f"/>
<path d="M2293.6 1455.2 L2302.1 1438.2 L2310.6 1455.2 Z" fill="#f07b6f"/>
<path d="M2449.2 1393.5 L2457.7 1376.5 L2466.2 1393.5 Z" fill="#f07b6f"/>
<path d="M2604.8 1291.6 L2613.3 1274.6 L2621.8 1291.6 Z" fill="#f07b6f"/>
<path d="M2760.4 1168.1 L2768.9 1151.1 L2777.4 1168.1 Z" fill="#f07b6f"/>
<polyline points="2146.5,1478.0 2302.1,1452.2 2457.7,1396.7 2613.3,1304.4 2768.9,1200.0" fill="none" stroke="#f3b400" stroke-width="4" stroke-linejoin="round"/>
<rect x="2138.0" y="1469.5" width="17.0" height="17.0" fill="#f3b400"/>
<rect x="2293.6" y="1443.7" width="17.0" height="17.0" fill="#f3b400"/>
<rect x="2449.2" y="1388.2" width="17.0" height="17.0" fill="#f3b400"/>
<rect x="2604.8" y="1295.9" width="17.0" height="17.0" fill="#f3b400"/>
<rect x="2760.4" y="1191.5" width="17.0" height="17.0" fill="#f3b400"/>
<polyline points="2146.5,1469.5 2302.1,1420.8 2457.7,1308.8 2613.3,1124.3 2768.9,906.5" fill="none" stroke="#2eb5a8" stroke-width="4" stroke-linejoin="round"/>
<rect x="2138.0" y="1461.0" width="17.0" height="17.0" fill="#2eb5a8"/>
<rect x="2293.6" y="1412.3" width="17.0" height="17.0" fill="#2eb5a8"/>
<rect x="2449.2" y="1300.3" width="17.0" height="17.0" fill="#2eb5a8"/>
<rect x="2604.8" y="1115.8" width="17.0" height="17.0" fill="#2eb5a8"/>
<rect x="2760.4" y="898.0" width="17.0" height="17.0" fill="#2eb5a8"/>
<line x1="83.0" y1="1618.5" x2="246.0" y2="1618.5" stroke="#6ea5c2" stroke-width="1"/>
<line x1="327.0" y1="1618.5" x2="1577.0" y2="1618.5" stroke="#6ea5c2" stroke-width="1"/>
<text x="255.5" y="1634.9" font-size="21.5" font-weight="700" fill="#000" stroke="#000" stroke-width="0.47" textLength="61.5" lengthAdjust="spacingAndGlyphs">284.4</text>
<rect x="150.0" y="1653.0" width="271.6" height="17.0" fill="#4cb2e6"/>
<rect x="1614.0" y="1658.5" width="10.5" height="11.5" fill="#4cb2e6"/>
<text x="1630.0" y="1670.0" font-size="22" font-weight="700" fill="#000" stroke="#000" stroke-width="0.48" textLength="169.5" lengthAdjust="spacingAndGlyphs">Personal Loans</text>
<rect x="2860.0" y="278.0" width="30.0" height="1392.0" fill="#161616"/>
<path d="M2869.5 296 L2876 287.5 L2882.5 296 Z" fill="#9a9a9a"/>
<rect x="2870.3" y="304" width="11.9" height="561.5" rx="6" fill="#9a9a9a"/>
<path d="M2869.5 1654 L2876 1662.5 L2882.5 1654 Z" fill="#9a9a9a"/>
<rect x="11.0" y="1670.0" width="2879.0" height="48.0" fill="#0a0a0a"/>
<rect x="1862.0" y="1664.0" width="25.0" height="6.0" fill="#fff"/>
<path d="M11 1670 H1866 Q1875.6 1670 1875.6 1679 V1718 H11 Z" fill="#0a0a0a"/>
<path d="M2027.2 1718 V1679 Q2027.2 1670 2036 1670 H2890 V1718 Z" fill="#0a0a0a"/>
<defs><linearGradient id="atab" x1="0" y1="0" x2="0" y2="1"><stop offset="0" stop-color="#ffffff"/><stop offset="1" stop-color="#d3ecfa"/></linearGradient></defs>
<path d="M1875.6 1670 H2027.2 V1706 Q2027.2 1712 2021 1712 H1881.6 Q1875.6 1712 1875.6 1706 Z" fill="url(#atab)"/>
<text x="1888.0" y="1697.0" font-size="21" fill="#1a1a1a" textLength="127.0" lengthAdjust="spacingAndGlyphs">Top_Revenue</text>
<rect x="1888.0" y="1704.3" width="127.0" height="2.6" fill="#1e7a46"/>
<path d="M54.5 1685.8 L47.5 1692.7 L54.5 1699.6" fill="none" stroke="#d8d8d8" stroke-width="1.7"/>
<path d="M95.8 1685.8 L102.8 1692.7 L95.8 1699.6" fill="none" stroke="#d8d8d8" stroke-width="1.7"/>
<circle cx="140.3" cy="1692.7" r="2.3" fill="#d8d8d8"/>
<circle cx="146.5" cy="1692.7" r="2.3" fill="#d8d8d8"/>
<circle cx="152.7" cy="1692.7" r="2.3" fill="#d8d8d8"/>
<rect x="177.0" y="1676.5" width="88.8" height="35.3" rx="6" fill="#fff06a"/>
<text x="221.4" y="1702.5" font-size="20.3" fill="#111" text-anchor="middle">Payroll</text>
<line x1="272.8" y1="1681.0" x2="272.8" y2="1707.0" stroke="#3a3a3a" stroke-width="1.2"/>
<rect x="279.2" y="1676.5" width="86.5" height="35.3" rx="6" fill="#fff06a"/>
<text x="322.4" y="1702.5" font-size="20.3" fill="#111" text-anchor="middle">CAPEX</text>
<line x1="372.7" y1="1681.0" x2="372.7" y2="1707.0" stroke="#3a3a3a" stroke-width="1.2"/>
<rect x="379.0" y="1676.5" width="112.5" height="35.3" rx="6" fill="#fff06a"/>
<text x="435.2" y="1702.5" font-size="20.3" fill="#111" text-anchor="middle">CapTable</text>
<line x1="498.5" y1="1681.0" x2="498.5" y2="1707.0" stroke="#3a3a3a" stroke-width="1.2"/>
<rect x="505.3" y="1676.5" width="89.3" height="35.3" rx="6" fill="#fff06a"/>
<text x="550.0" y="1702.5" font-size="20.3" fill="#111" text-anchor="middle">Capital</text>
<line x1="601.6" y1="1681.0" x2="601.6" y2="1707.0" stroke="#3a3a3a" stroke-width="1.2"/>
<rect x="608.0" y="1676.5" width="41.4" height="35.3" rx="6" fill="#4ab4e8"/>
<text x="628.7" y="1702.5" font-size="20.3" fill="#111" text-anchor="middle">IS</text>
<line x1="656.4" y1="1681.0" x2="656.4" y2="1707.0" stroke="#3a3a3a" stroke-width="1.2"/>
<rect x="662.7" y="1676.5" width="48.3" height="35.3" rx="6" fill="#4ab4e8"/>
<text x="686.9" y="1702.5" font-size="20.3" fill="#111" text-anchor="middle">CF</text>
<line x1="718.0" y1="1681.0" x2="718.0" y2="1707.0" stroke="#3a3a3a" stroke-width="1.2"/>
<rect x="724.0" y="1676.5" width="47.5" height="35.3" rx="6" fill="#4ab4e8"/>
<text x="747.8" y="1702.5" font-size="20.3" fill="#111" text-anchor="middle">BS</text>
<line x1="778.5" y1="1681.0" x2="778.5" y2="1707.0" stroke="#3a3a3a" stroke-width="1.2"/>
<rect x="785.3" y="1676.5" width="114.1" height="35.3" rx="6" fill="#4ab4e8"/>
<text x="842.3" y="1702.5" font-size="20.3" fill="#111" text-anchor="middle">Scenarios</text>
<line x1="906.4" y1="1681.0" x2="906.4" y2="1707.0" stroke="#3a3a3a" stroke-width="1.2"/>
<rect x="913.0" y="1676.5" width="114.8" height="35.3" rx="6" fill="#4ab4e8"/>
<text x="970.4" y="1702.5" font-size="20.3" fill="#111" text-anchor="middle">Valuation</text>
<line x1="1034.8" y1="1681.0" x2="1034.8" y2="1707.0" stroke="#3a3a3a" stroke-width="1.2"/>
<rect x="1040.8" y="1676.5" width="114.1" height="35.3" rx="6" fill="#4ab4e8"/>
<text x="1097.8" y="1702.5" font-size="20.3" fill="#111" text-anchor="middle">Summary</text>
<line x1="1161.9" y1="1681.0" x2="1161.9" y2="1707.0" stroke="#3a3a3a" stroke-width="1.2"/>
<rect x="1167.9" y="1676.5" width="47.8" height="35.3" rx="6" fill="#4ab4e8"/>
<text x="1191.8" y="1702.5" font-size="20.3" fill="#111" text-anchor="middle">BE</text>
<line x1="1222.7" y1="1681.0" x2="1222.7" y2="1707.0" stroke="#3a3a3a" stroke-width="1.2"/>
<rect x="1229.0" y="1676.5" width="71.6" height="35.3" rx="6" fill="#4ab4e8"/>
<text x="1264.8" y="1702.5" font-size="20.3" fill="#111" text-anchor="middle">ROIC</text>
<line x1="1307.6" y1="1681.0" x2="1307.6" y2="1707.0" stroke="#3a3a3a" stroke-width="1.2"/>
<rect x="1314.0" y="1676.5" width="84.4" height="35.3" rx="6" fill="#4ab4e8"/>
<text x="1356.2" y="1702.5" font-size="20.3" fill="#111" text-anchor="middle">Charts</text>
<line x1="1405.4" y1="1681.0" x2="1405.4" y2="1707.0" stroke="#3a3a3a" stroke-width="1.2"/>
<rect x="1412.0" y="1676.5" width="63.5" height="35.3" rx="6" fill="#4ab4e8"/>
<text x="1443.8" y="1702.5" font-size="20.3" fill="#111" text-anchor="middle">KPIs</text>
<line x1="1482.5" y1="1681.0" x2="1482.5" y2="1707.0" stroke="#3a3a3a" stroke-width="1.2"/>
<rect x="1488.9" y="1676.5" width="168.4" height="35.3" rx="6" fill="#4ab4e8"/>
<text x="1573.1" y="1702.5" font-size="20.3" fill="#111" text-anchor="middle">Sources &amp; Uses</text>
<line x1="1664.3" y1="1681.0" x2="1664.3" y2="1707.0" stroke="#3a3a3a" stroke-width="1.2"/>
<rect x="1670.7" y="1676.5" width="83.2" height="35.3" rx="6" fill="#4ab4e8"/>
<text x="1712.3" y="1702.5" font-size="20.3" fill="#111" text-anchor="middle">Ratios</text>
<line x1="1760.9" y1="1681.0" x2="1760.9" y2="1707.0" stroke="#3a3a3a" stroke-width="1.2"/>
<rect x="1767.3" y="1676.5" width="95.0" height="35.3" rx="6" fill="#4ab4e8"/>
<text x="1814.8" y="1702.5" font-size="20.3" fill="#111" text-anchor="middle">DuPont</text>
<line x1="1869.3" y1="1681.0" x2="1869.3" y2="1707.0" stroke="#3a3a3a" stroke-width="1.2"/>
<line x1="2033.5" y1="1681.0" x2="2033.5" y2="1707.0" stroke="#3a3a3a" stroke-width="1.2"/>
<defs><clipPath id="tclip"><rect x="2040" y="1670" width="32" height="48"/></clipPath></defs>
<g clip-path="url(#tclip)"><rect x="2040" y="1676.5" width="60" height="35.3" rx="6" fill="#4ab4e8"/>
<text x="2053.0" y="1702.0" font-size="21" fill="#111">To</text>
</g>
<circle cx="2089" cy="1692.5" r="2.1" fill="#d8d8d8"/>
<circle cx="2095.5" cy="1692.5" r="2.1" fill="#d8d8d8"/>
<circle cx="2102" cy="1692.5" r="2.1" fill="#d8d8d8"/>
<path d="M2134 1693.5 H2150 M2142 1685.5 V1701.5" stroke="#e0e0e0" stroke-width="1.6"/>
<circle cx="2191.5" cy="1687" r="1.8" fill="#d8d8d8"/>
<circle cx="2191.5" cy="1694" r="1.8" fill="#d8d8d8"/>
<circle cx="2191.5" cy="1701" r="1.8" fill="#d8d8d8"/>
<rect x="2217" y="1680.6" width="643" height="25.4" rx="12.7" fill="#1a1a1a"/>
<path d="M2233.5 1687 L2226.5 1693.3 L2233.5 1699.6 Z" fill="#a0a0a0"/>
<rect x="2242" y="1687" width="508" height="12.5" rx="6.25" fill="#a0a0a0"/>
<path d="M2846 1687 L2853 1693.3 L2846 1699.6 Z" fill="#a0a0a0"/>
<rect x="11.0" y="1718.0" width="2879.0" height="32.5" fill="#141414"/>
<line x1="11.0" y1="1718.5" x2="2890.0" y2="1718.5" stroke="#2c2c2c" stroke-width="1"/>
<text x="27.0" y="1741.3" font-size="17" fill="#e8e8e8" textLength="43.0" lengthAdjust="spacingAndGlyphs">Ready</text>
<path d="M99.5 1742.5 V1726.5 H120 V1735" fill="none" stroke="#e0e0e0" stroke-width="1.4"/>
<line x1="99.5" y1="1730.0" x2="120.0" y2="1730.0" stroke="#e0e0e0" stroke-width="1.3"/>
<line x1="102.5" y1="1734.0" x2="108.0" y2="1734.0" stroke="#e0e0e0" stroke-width="1.3"/>
<line x1="102.5" y1="1737.5" x2="107.0" y2="1737.5" stroke="#e0e0e0" stroke-width="1.3"/>
<circle cx="113.5" cy="1739" r="5.2" fill="#141414" stroke="#e8e8e8" stroke-width="1.5"/><circle cx="113.5" cy="1739" r="2.6" fill="#e8e8e8"/>
<circle cx="155.5" cy="1727.5" r="2.5" fill="none" stroke="#e8e8e8" stroke-width="1.4"/>
<path d="M147 1730 Q150 1734 155.5 1733.5 Q161 1734 164 1730 M155.5 1733.5 V1738 L152 1745 M155.5 1738 L158 1741" fill="none" stroke="#e8e8e8" stroke-width="1.5" stroke-linecap="round"/>
<path d="M158 1738.5 L166.5 1746.5 M166.5 1738.5 L158 1746.5" stroke="#e8e8e8" stroke-width="1.4"/>
<text x="173.0" y="1741.3" font-size="17" font-weight="700" fill="#f4f4f4" textLength="188.0" lengthAdjust="spacingAndGlyphs">Accessibility: Investigate</text>
<rect x="2444.8" y="1718.0" width="59.8" height="32.5" fill="#262626"/>
<g fill="none" stroke="#e0e0e0" stroke-width="1.3"><rect x="2464.5" y="1725.5" width="20" height="18"/><path d="M2471 1725.5 V1743.5 M2478 1725.5 V1743.5 M2464.5 1731.5 H2484.5 M2464.5 1737.5 H2484.5"/><rect x="2524.5" y="1725.5" width="21" height="18"/><rect x="2529" y="1729" width="12" height="11"/><path d="M2531 1732 H2539 M2531 1735 H2539"/><rect x="2584.5" y="1725.5" width="21" height="18"/><path d="M2590.5 1725.5 V1734.5 M2596.5 1725.5 V1734.5 M2584.5 1734.5 H2596.5"/></g>
<line x1="2633.0" y1="1734.5" x2="2645.0" y2="1734.5" stroke="#d0d0d0" stroke-width="1.4"/>
<line x1="2653.0" y1="1735.0" x2="2800.0" y2="1735.0" stroke="#a0a0a0" stroke-width="2"/>
<line x1="2727.0" y1="1730.0" x2="2727.0" y2="1740.0" stroke="#a0a0a0" stroke-width="1.4"/>
<rect x="2732.7" y="1726.5" width="8.6" height="16.3" rx="1.5" fill="#a8a8a8"/>
<path d="M2808 1735 H2821 M2814.5 1728.5 V1741.5" stroke="#d0d0d0" stroke-width="1.4"/>
<text x="2840.0" y="1741.3" font-size="17" fill="#e8e8e8" textLength="38.0" lengthAdjust="spacingAndGlyphs">140%</text>
</svg>
</body></html>
